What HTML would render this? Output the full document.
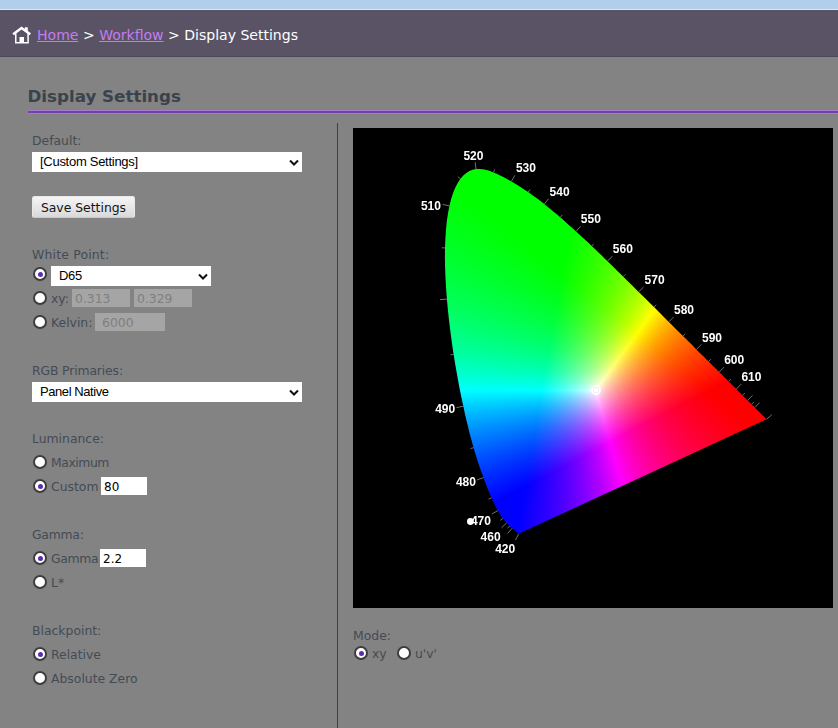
<!DOCTYPE html>
<html lang="en">
<head>
<meta charset="utf-8">
<title>Display Settings</title>
<style>
*{box-sizing:border-box;margin:0;padding:0}
html,body{width:838px;height:728px;overflow:hidden}
body{background:#838383;font-family:"DejaVu Sans","Liberation Sans",Verdana,sans-serif;font-size:12.4px;color:#434b55;position:relative}
.abs{position:absolute}
#strip{left:0;top:0;width:838px;height:9px;background:#b1cfeb}
#strip2{left:0;top:9px;width:838px;height:1px;background:#dfe6ee}
#hdr{left:0;top:10px;width:838px;height:46px;background:#595365}
#hdrline{left:0;top:56px;width:838px;height:1px;background:#4d4855}
#crumb{left:37px;top:26px;height:18px;line-height:18px;font-size:14.04px;color:#fff;white-space:nowrap}
#crumb a{color:#c77bf0;text-decoration:underline}
#home{left:12px;top:25px}
h1{left:27.5px;top:85px;font-size:16.7px;line-height:22px;font-weight:bold;color:#3a424c;white-space:nowrap}
#hline{left:28px;top:110px;width:810px;height:4px;background:linear-gradient(#a57bcb 0 1px,#733fa8 1px 3px,#a57bcb 3px 4px)}
#vline{left:337px;top:123px;width:1px;height:605px;background:#3f3f3f}
.lbl{left:32px;height:16px;line-height:16px;white-space:nowrap}
.sel{background:#fff;font-family:"Liberation Sans",Arial,sans-serif;font-size:13px;letter-spacing:-0.28px;color:#000;line-height:20px;padding-left:8px;white-space:nowrap}
.sel svg{position:absolute;right:2px;top:6px}
.btn{left:32px;top:196px;width:103px;height:22px;border:1px solid #e9e9e9;border-bottom-color:#c9c9c9;border-radius:2.5px;background:linear-gradient(#f5f5f5,#d9d9d9);color:#151515;line-height:21px;text-align:center;white-space:nowrap}
.rad{width:14px;height:14px;border-radius:50%;background:#fff;border:2px solid #3d3d3d}
.rad.on::after{content:"";position:absolute;left:2.5px;top:2.5px;width:5px;height:5px;border-radius:50%;background:#5a2db0}
.inp{background:#fff;color:#000;height:18px;line-height:20px;font-size:12px;padding-left:3px;white-space:nowrap}
.inp.dis{background:#a5a5a5;color:#7f7f7f;font-size:12.4px}
#canvas{left:353px;top:128px;width:480px;height:480px;background:#000;overflow:hidden}
.cie{position:absolute;left:0;width:480px}
.cie i{display:block;height:1px}
.ov{position:absolute;left:0;top:0;will-change:transform}
</style>
</head>
<body>
<div class="abs" id="strip"></div><div class="abs" id="strip2"></div>
<div class="abs" id="hdr"></div><div class="abs" id="hdrline"></div>
<svg class="abs" id="home" width="20" height="20" viewBox="0 0 20 20"><g fill="none" stroke="#fff"><path d="M1.1 9.2 L9.57 3 L18.3 9.2" stroke-width="2.4"/><path d="M3.76 8.3 V17.75 H16.1 V8.3" stroke-width="1.5"/></g><path d="M7.5 12.1 H12 V17.2 H7.5 Z M12.84 2.15 H15.76 V7 H12.84 Z" fill="#fff"/></svg>
<div class="abs" id="crumb"><a>Home</a> &gt; <a>Workflow</a> &gt; Display Settings</div>
<h1 class="abs">Display Settings</h1>
<div class="abs" id="hline"></div>
<div class="abs" id="vline"></div>

<div class="abs lbl" style="top:133px">Default:</div>
<div class="abs sel" style="left:32px;top:152px;width:270px;height:20px">[Custom Settings]<svg width="12" height="8" viewBox="0 0 12 8"><path d="M2 2.5 L6 6.5 L10 2.5" stroke="#111" stroke-width="2" fill="none"/></svg></div>
<div class="abs btn">Save Settings</div>

<div class="abs lbl" style="top:247px;letter-spacing:0.2px">White Point:</div>
<div class="abs rad on" style="left:33px;top:267px"></div>
<div class="abs sel" style="left:51px;top:266px;width:160px;height:20px">D65<svg width="12" height="8" viewBox="0 0 12 8"><path d="M2 2.5 L6 6.5 L10 2.5" stroke="#111" stroke-width="2" fill="none"/></svg></div>
<div class="abs rad" style="left:33px;top:291px"></div>
<div class="abs lbl" style="left:51px;top:291px">xy:</div>
<div class="abs inp dis" style="left:72px;top:289px;width:58px">0.313</div>
<div class="abs inp dis" style="left:134px;top:289px;width:58px">0.329</div>
<div class="abs rad" style="left:33px;top:315px"></div>
<div class="abs lbl" style="left:51px;top:315px">Kelvin:</div>
<div class="abs inp dis" style="left:95px;top:313px;width:70px;padding-left:7px">6000</div>

<div class="abs lbl" style="top:363px;letter-spacing:-0.14px">RGB Primaries:</div>
<div class="abs sel" style="left:32px;top:382px;width:270px;height:20px;letter-spacing:-0.43px">Panel Native<svg width="12" height="8" viewBox="0 0 12 8"><path d="M2 2.5 L6 6.5 L10 2.5" stroke="#111" stroke-width="2" fill="none"/></svg></div>

<div class="abs lbl" style="top:431px">Luminance:</div>
<div class="abs rad" style="left:33px;top:455px"></div>
<div class="abs lbl" style="left:51px;top:455px;letter-spacing:-0.45px">Maximum</div>
<div class="abs rad on" style="left:33px;top:479px"></div>
<div class="abs lbl" style="left:51px;top:479px">Custom</div>
<div class="abs inp" style="left:101px;top:477px;width:46px">80</div>

<div class="abs lbl" style="top:527px;letter-spacing:-0.25px">Gamma:</div>
<div class="abs rad on" style="left:33px;top:551px"></div>
<div class="abs lbl" style="left:51px;top:551px;letter-spacing:-0.35px">Gamma</div>
<div class="abs inp" style="left:100px;top:549px;width:46px">2.2</div>
<div class="abs rad" style="left:33px;top:575px"></div>
<div class="abs lbl" style="left:51px;top:575px">L*</div>

<div class="abs lbl" style="top:623px">Blackpoint:</div>
<div class="abs rad on" style="left:33px;top:647px"></div>
<div class="abs lbl" style="left:51px;top:647px">Relative</div>
<div class="abs rad" style="left:33px;top:671px"></div>
<div class="abs lbl" style="left:51px;top:671px">Absolute Zero</div>

<div class="abs" id="canvas">
<div class="cie" style="top:39px">
<i></i>
<i style="background:linear-gradient(90deg,#0f0 122px,#0f0 129px)"></i>
<i style="background:linear-gradient(90deg,#0f0 116px,#0f0 136px)"></i>
<i style="background:linear-gradient(90deg,#0f0 114px,#0f0 139px)"></i>
<i style="background:linear-gradient(90deg,#0f0 112px,#0f0 142px)"></i>
<i style="background:linear-gradient(90deg,#0f0 111px,#0f0 144px)"></i>
<i style="background:linear-gradient(90deg,#0f0 109px,#0f0 147px)"></i>
<i style="background:linear-gradient(90deg,#0f0 108px,#0f0 149px)"></i>
<i style="background:linear-gradient(90deg,#0f0 107px,#0f0 151px)"></i>
<i style="background:linear-gradient(90deg,#0f0 106px,#0f0 153px)"></i>
<i style="background:linear-gradient(90deg,#0f0 105px,#0f0 155px)"></i>
<i style="background:linear-gradient(90deg,#0f0 105px,#0f0 157px)"></i>
<i style="background:linear-gradient(90deg,#0f0 104px,#0f0 158px)"></i>
<i style="background:linear-gradient(90deg,#0f0 103px,#0f0 160px)"></i>
<i style="background:linear-gradient(90deg,#0f0 103px,#0f0 162px)"></i>
<i style="background:linear-gradient(90deg,#0f0 102px,#0f0 164px)"></i>
<i style="background:linear-gradient(90deg,#0f0 102px,#0f0 165px)"></i>
<i style="background:linear-gradient(90deg,#0f0 101px,#0f0 167px)"></i>
<i style="background:linear-gradient(90deg,#0f0 101px,#0f0 168px)"></i>
<i style="background:linear-gradient(90deg,#00ff01 100px,#0f0 170px)"></i>
<i style="background:linear-gradient(90deg,#00ff02 100px,#0f0 172px)"></i>
<i style="background:linear-gradient(90deg,#00ff02 99px,#0f0 106px,#0f0 173px)"></i>
<i style="background:linear-gradient(90deg,#00ff03 99px,#0f0 107px,#0f0 175px)"></i>
<i style="background:linear-gradient(90deg,#00ff04 98px,#0f0 108px,#0f0 176px)"></i>
<i style="background:linear-gradient(90deg,#00ff04 98px,#0f0 109px,#0f0 178px)"></i>
<i style="background:linear-gradient(90deg,#00ff05 98px,#0f0 110px,#0f0 179px)"></i>
<i style="background:linear-gradient(90deg,#00ff06 97px,#0f0 112px,#0f0 180px)"></i>
<i style="background:linear-gradient(90deg,#00ff06 97px,#0f0 113px,#0f0 182px)"></i>
<i style="background:linear-gradient(90deg,#00ff07 97px,#0f0 114px,#0f0 183px)"></i>
<i style="background:linear-gradient(90deg,#00ff08 96px,#0f0 115px,#0f0 185px)"></i>
<i style="background:linear-gradient(90deg,#00ff08 96px,#0f0 117px,#0f0 186px)"></i>
<i style="background:linear-gradient(90deg,#00ff09 96px,#0f0 118px,#0f0 187px)"></i>
<i style="background:linear-gradient(90deg,#00ff0a 95px,#0f0 119px,#0f0 189px)"></i>
<i style="background:linear-gradient(90deg,#00ff0a 95px,#0f0 120px,#0f0 190px)"></i>
<i style="background:linear-gradient(90deg,#00ff0b 95px,#0f0 122px,#0f0 191px)"></i>
<i style="background:linear-gradient(90deg,#00ff0b 95px,#0f0 123px,#0f0 192px)"></i>
<i style="background:linear-gradient(90deg,#00ff0c 94px,#0f0 124px,#0f0 194px)"></i>
<i style="background:linear-gradient(90deg,#00ff0d 94px,#0f0 125px,#0f0 195px)"></i>
<i style="background:linear-gradient(90deg,#00ff0d 94px,#0f0 126px,#0f0 196px)"></i>
<i style="background:linear-gradient(90deg,#00ff0e 94px,#0f0 128px,#0f0 197px)"></i>
<i style="background:linear-gradient(90deg,#00ff0f 93px,#0f0 129px,#0f0 199px)"></i>
<i style="background:linear-gradient(90deg,#00ff0f 93px,#0f0 130px,#0f0 200px)"></i>
<i style="background:linear-gradient(90deg,#00ff10 93px,#0f0 131px,#0f0 201px)"></i>
<i style="background:linear-gradient(90deg,#0f1 93px,#0f0 133px,#0f0 202px)"></i>
<i style="background:linear-gradient(90deg,#0f1 93px,#0f0 134px,#0f0 204px)"></i>
<i style="background:linear-gradient(90deg,#00ff12 93px,#0f0 135px,#0f0 205px)"></i>
<i style="background:linear-gradient(90deg,#00ff13 92px,#0f0 136px,#0f0 206px)"></i>
<i style="background:linear-gradient(90deg,#00ff13 92px,#0f0 138px,#0f0 207px)"></i>
<i style="background:linear-gradient(90deg,#00ff14 92px,#0f0 139px,#0f0 208px)"></i>
<i style="background:linear-gradient(90deg,#00ff15 92px,#0f0 140px,#0f0 209px)"></i>
<i style="background:linear-gradient(90deg,#00ff15 92px,#0f0 141px,#0f0 211px)"></i>
<i style="background:linear-gradient(90deg,#00ff16 92px,#0f0 143px,#0f0 212px)"></i>
<i style="background:linear-gradient(90deg,#00ff17 91px,#0f0 144px,#0f0 213px)"></i>
<i style="background:linear-gradient(90deg,#00ff17 91px,#0f0 145px,#0f0 214px)"></i>
<i style="background:linear-gradient(90deg,#00ff18 91px,#0f0 146px,#0f0 215px)"></i>
<i style="background:linear-gradient(90deg,#00ff19 91px,#0f0 148px,#0f0 216px)"></i>
<i style="background:linear-gradient(90deg,#00ff19 91px,#0f0 149px,#0f0 217px)"></i>
<i style="background:linear-gradient(90deg,#00ff1a 91px,#0f0 150px,#01ff00 218px)"></i>
<i style="background:linear-gradient(90deg,#00ff1a 91px,#0f0 151px,#0f0 217px,#03ff00 220px)"></i>
<i style="background:linear-gradient(90deg,#00ff1b 91px,#0f0 153px,#0f0 217px,#05ff00 221px)"></i>
<i style="background:linear-gradient(90deg,#00ff1c 91px,#0f0 154px,#0f0 216px,#06ff00 222px)"></i>
<i style="background:linear-gradient(90deg,#00ff1c 91px,#0f0 155px,#0f0 216px,#08ff00 223px)"></i>
<i style="background:linear-gradient(90deg,#00ff1d 90px,#0f0 156px,#0f0 216px,#09ff00 224px)"></i>
<i style="background:linear-gradient(90deg,#00ff1e 90px,#0f0 157px,#0f0 216px,#0bff00 225px)"></i>
<i style="background:linear-gradient(90deg,#00ff1f 90px,#0f0 159px,#0f0 216px,#0cff00 226px)"></i>
<i style="background:linear-gradient(90deg,#00ff1f 90px,#0f0 160px,#0f0 216px,#0eff00 227px)"></i>
<i style="background:linear-gradient(90deg,#00ff20 90px,#0f0 161px,#0f0 215px,#0fff00 228px)"></i>
<i style="background:linear-gradient(90deg,#00ff21 90px,#0f0 162px,#0f0 215px,#1f0 229px)"></i>
<i style="background:linear-gradient(90deg,#00ff21 90px,#0f0 164px,#0f0 215px,#13ff00 230px)"></i>
<i style="background:linear-gradient(90deg,#0f2 90px,#0f0 165px,#0f0 215px,#16ff00 232px)"></i>
<i style="background:linear-gradient(90deg,#00ff23 90px,#0f0 166px,#0f0 215px,#17ff00 233px)"></i>
<i style="background:linear-gradient(90deg,#00ff23 90px,#0f0 167px,#0f0 215px,#19ff00 234px)"></i>
<i style="background:linear-gradient(90deg,#00ff24 90px,#0f0 169px,#0f0 214px,#1bff00 235px)"></i>
<i style="background:linear-gradient(90deg,#00ff25 90px,#0f0 170px,#0f0 214px,#1cff00 236px)"></i>
<i style="background:linear-gradient(90deg,#00ff26 90px,#0f0 171px,#0f0 214px,#1eff00 237px)"></i>
<i style="background:linear-gradient(90deg,#00ff26 90px,#0f0 172px,#0f0 214px,#20ff00 238px)"></i>
<i style="background:linear-gradient(90deg,#00ff27 90px,#0f0 174px,#0f0 214px,#2f0 239px)"></i>
<i style="background:linear-gradient(90deg,#00ff28 90px,#0f0 175px,#0f0 214px,#24ff00 240px)"></i>
<i style="background:linear-gradient(90deg,#00ff28 90px,#0f0 176px,#0f0 213px,#25ff00 241px)"></i>
<i style="background:linear-gradient(90deg,#00ff29 90px,#0f0 177px,#0f0 213px,#27ff00 242px)"></i>
<i style="background:linear-gradient(90deg,#00ff2a 90px,#0f0 178px,#0f0 213px,#29ff00 243px)"></i>
<i style="background:linear-gradient(90deg,#00ff2b 89px,#0f0 180px,#0f0 213px,#2bff00 244px)"></i>
<i style="background:linear-gradient(90deg,#00ff2c 89px,#00ff17 137px,#0f0 181px,#0f0 213px,#2dff00 245px)"></i>
<i style="background:linear-gradient(90deg,#00ff2d 89px,#00ff17 138px,#0f0 182px,#0f0 213px,#2fff00 246px)"></i>
<i style="background:linear-gradient(90deg,#00ff2d 89px,#00ff18 138px,#0f0 183px,#0f0 212px,#31ff00 247px)"></i>
<i style="background:linear-gradient(90deg,#00ff2e 89px,#00ff18 139px,#0f0 185px,#0f0 212px,#3f0 248px)"></i>
<i style="background:linear-gradient(90deg,#00ff2f 89px,#00ff19 140px,#0f0 186px,#0f0 212px,#36ff00 249px)"></i>
<i style="background:linear-gradient(90deg,#00ff30 89px,#00ff19 141px,#0f0 187px,#0f0 212px,#39ff00 251px)"></i>
<i style="background:linear-gradient(90deg,#00ff30 89px,#00ff1a 141px,#0f0 188px,#0f0 212px,#3cff00 252px)"></i>
<i style="background:linear-gradient(90deg,#00ff31 89px,#00ff1a 142px,#0f0 190px,#0f0 212px,#3eff00 253px)"></i>
<i style="background:linear-gradient(90deg,#00ff32 89px,#00ff1a 143px,#0f0 191px,#0f0 211px,#1bff00 231px,#40ff00 254px)"></i>
<i style="background:linear-gradient(90deg,#0f3 89px,#00ff1b 143px,#0f0 192px,#0f0 211px,#1dff00 232px,#42ff00 255px)"></i>
<i style="background:linear-gradient(90deg,#00ff34 89px,#00ff1b 144px,#0f0 193px,#0f0 211px,#1fff00 233px,#45ff00 256px)"></i>
<i style="background:linear-gradient(90deg,#00ff34 89px,#00ff1c 144px,#0f0 195px,#0f0 211px,#21ff00 234px,#47ff00 257px)"></i>
<i style="background:linear-gradient(90deg,#00ff35 89px,#00ff1c 146px,#0f0 196px,#0f0 211px,#23ff00 235px,#4aff00 258px)"></i>
<i style="background:linear-gradient(90deg,#00ff36 89px,#00ff1d 146px,#0f0 197px,#0f0 211px,#25ff00 236px,#4cff00 259px)"></i>
<i style="background:linear-gradient(90deg,#00ff37 89px,#00ff1d 147px,#0f0 198px,#0f0 210px,#23ff00 234px,#4fff00 260px)"></i>
<i style="background:linear-gradient(90deg,#00ff37 90px,#00ff1d 148px,#0f0 200px,#0f0 210px,#25ff00 235px,#51ff00 261px)"></i>
<i style="background:linear-gradient(90deg,#00ff38 90px,#00ff1e 149px,#0f0 201px,#0f0 210px,#27ff00 236px,#54ff00 262px)"></i>
<i style="background:linear-gradient(90deg,#00ff39 90px,#00ff1e 150px,#0f0 202px,#0f0 210px,#29ff00 237px,#56ff00 263px)"></i>
<i style="background:linear-gradient(90deg,#00ff3a 90px,#00ff1f 150px,#0f0 203px,#0f0 210px,#2bff00 238px,#59ff00 264px)"></i>
<i style="background:linear-gradient(90deg,#00ff3b 90px,#00ff24 141px,#0f0 204px,#0f0 210px,#2dff00 239px,#5cff00 265px)"></i>
<i style="background:linear-gradient(90deg,#00ff3b 90px,#00ff23 146px,#0f0 209px,#2aff00 237px,#5fff00 266px)"></i>
<i style="background:linear-gradient(90deg,#00ff3c 90px,#0f2 149px,#0f0 209px,#2cff00 238px,#61ff00 267px)"></i>
<i style="background:linear-gradient(90deg,#00ff3d 90px,#00ff21 152px,#0f0 209px,#2fff00 239px,#64ff00 268px)"></i>
<i style="background:linear-gradient(90deg,#00ff3e 90px,#00ff21 154px,#0f0 209px,#31ff00 240px,#67ff00 269px)"></i>
<i style="background:linear-gradient(90deg,#00ff3f 90px,#0f2 154px,#00ff01 209px,#3f0 241px,#6aff00 270px)"></i>
<i style="background:linear-gradient(90deg,#00ff40 90px,#00ff23 154px,#00ff02 209px,#34ff00 241px,#6dff00 271px)"></i>
<i style="background:linear-gradient(90deg,#00ff41 90px,#00ff24 153px,#00ff04 208px,#08ff00 214px,#32ff00 240px,#70ff00 272px)"></i>
<i style="background:linear-gradient(90deg,#00ff42 90px,#00ff25 153px,#00ff05 208px,#0aff00 215px,#35ff00 241px,#74ff00 273px)"></i>
<i style="background:linear-gradient(90deg,#00ff43 90px,#00ff26 153px,#00ff06 208px,#0cff00 216px,#37ff00 242px,#7f0 274px)"></i>
<i style="background:linear-gradient(90deg,#0f4 90px,#00ff27 153px,#00ff06 208px,#0eff00 217px,#3aff00 243px,#7aff00 275px)"></i>
<i style="background:linear-gradient(90deg,#0f4 90px,#00ff28 153px,#00ff07 208px,#1f0 219px,#3cff00 244px,#7eff00 276px)"></i>
<i style="background:linear-gradient(90deg,#00ff45 90px,#00ff29 153px,#01ff08 208px,#13ff00 220px,#48ff00 250px,#81ff00 277px)"></i>
<i style="background:linear-gradient(90deg,#00ff46 90px,#00ff2a 153px,#00ff0a 207px,#15ff00 221px,#4bff00 251px,#85ff00 278px)"></i>
<i style="background:linear-gradient(90deg,#00ff47 90px,#00ff2b 153px,#00ff0b 207px,#17ff00 222px,#4eff00 252px,#8f0 279px)"></i>
<i style="background:linear-gradient(90deg,#00ff48 90px,#00ff2c 153px,#00ff0c 207px,#1bff00 224px,#50ff00 253px,#8cff00 280px)"></i>
<i style="background:linear-gradient(90deg,#00ff49 90px,#00ff2d 153px,#00ff0d 207px,#1dff00 225px,#53ff00 254px,#90ff00 281px)"></i>
<i style="background:linear-gradient(90deg,#00ff4a 90px,#00ff2e 153px,#00ff0e 207px,#1fff00 226px,#56ff00 255px,#93ff00 282px)"></i>
<i style="background:linear-gradient(90deg,#00ff4b 90px,#00ff2f 153px,#01ff0f 207px,#2f0 227px,#59ff00 256px,#97ff00 283px)"></i>
<i style="background:linear-gradient(90deg,#00ff4c 91px,#00ff30 153px,#00ff10 206px,#26ff00 229px,#5eff00 258px,#9bff00 284px)"></i>
<i style="background:linear-gradient(90deg,#00ff4d 91px,#00ff31 153px,#0f1 206px,#28ff00 230px,#61ff00 259px,#9fff00 285px)"></i>
<i style="background:linear-gradient(90deg,#00ff4e 91px,#00ff32 153px,#00ff13 206px,#2aff00 231px,#64ff00 260px,#a4ff00 286px)"></i>
<i style="background:linear-gradient(90deg,#00ff4f 91px,#0f3 153px,#00ff14 206px,#2dff00 232px,#68ff00 261px,#a8ff00 287px)"></i>
<i style="background:linear-gradient(90deg,#00ff50 91px,#00ff34 153px,#00ff15 206px,#31ff00 234px,#6bff00 262px,#acff00 288px)"></i>
<i style="background:linear-gradient(90deg,#00ff51 91px,#00ff35 153px,#01ff16 206px,#3f0 235px,#6eff00 263px,#b1ff00 289px)"></i>
<i style="background:linear-gradient(90deg,#00ff52 91px,#00ff37 152px,#00ff17 205px,#36ff00 236px,#72ff00 264px,#b5ff00 290px)"></i>
<i style="background:linear-gradient(90deg,#00ff53 91px,#00ff38 152px,#00ff18 205px,#39ff00 237px,#75ff00 265px,#baff00 291px)"></i>
<i style="background:linear-gradient(90deg,#00ff54 91px,#00ff39 152px,#00ff1a 205px,#3dff00 239px,#7bff00 267px,#bfff00 292px)"></i>
<i style="background:linear-gradient(90deg,#0f5 91px,#00ff3a 152px,#00ff1b 205px,#40ff00 240px,#7fff00 268px,#c3ff00 293px)"></i>
<i style="background:linear-gradient(90deg,#00ff56 91px,#00ff3b 152px,#01ff1c 205px,#43ff00 241px,#83ff00 269px,#c8ff00 294px)"></i>
<i style="background:linear-gradient(90deg,#00ff57 91px,#00ff3c 152px,#01ff1d 205px,#22ff0f 224px,#46ff00 242px,#87ff00 270px,#ceff00 295px)"></i>
<i style="background:linear-gradient(90deg,#00ff59 91px,#00ff3e 152px,#00ff1f 204px,#21ff11 223px,#49ff00 243px,#5fff00 253px,#95ff00 275px,#d3ff00 296px)"></i>
<i style="background:linear-gradient(90deg,#00ff5a 91px,#00ff3f 152px,#00ff20 204px,#23ff11 224px,#4bff01 244px,#62ff00 254px,#9f0 276px,#d8ff00 297px)"></i>
<i style="background:linear-gradient(90deg,#00ff5a 92px,#00ff40 152px,#00ff21 204px,#27ff11 226px,#51ff00 246px,#65ff00 255px,#9eff00 277px,#deff00 298px)"></i>
<i style="background:linear-gradient(90deg,#00ff5b 92px,#00ff41 152px,#0f2 204px,#28ff12 226px,#54ff00 247px,#69ff00 256px,#a2ff00 278px,#e3ff00 299px)"></i>
<i style="background:linear-gradient(90deg,#00ff5d 92px,#00ff42 152px,#01ff24 204px,#2bff12 227px,#57ff00 248px,#6aff00 256px,#a7ff00 279px,#e9ff00 300px)"></i>
<i style="background:linear-gradient(90deg,#00ff5e 92px,#0f4 152px,#01ff25 204px,#2bff14 227px,#5aff01 249px,#6dff00 257px,#abff00 280px,#efff00 301px)"></i>
<i style="background:linear-gradient(90deg,#00ff5f 92px,#00ff45 152px,#00ff27 203px,#34ff12 231px,#60ff00 251px,#6fff00 257px,#b0ff00 281px,#f5ff00 302px)"></i>
<i style="background:linear-gradient(90deg,#00ff60 92px,#00ff46 152px,#00ff28 203px,#37ff12 232px,#63ff00 252px,#72ff00 258px,#b5ff00 282px,#fcff00 303px)"></i>
<i style="background:linear-gradient(90deg,#00ff61 92px,#00ff47 152px,#00ff29 203px,#35ff14 231px,#67ff00 253px,#71ff00 257px,#aeff00 279px,#d4ff00 291px,#feff00 303px,#fffc00 304px)"></i>
<i style="background:linear-gradient(90deg,#00ff63 92px,#00ff48 152px,#00ff2a 203px,#34ff16 230px,#6bff01 254px,#afff00 279px,#d6ff00 291px,#fdff00 302px,#fff600 305px)"></i>
<i style="background:linear-gradient(90deg,#00ff64 92px,#00ff4a 152px,#01ff2c 203px,#37ff17 231px,#71ff00 256px,#b4ff00 280px,#fcff00 301px,#fffe00 302px,#ffef00 306px)"></i>
<i style="background:linear-gradient(90deg,#00ff65 92px,#00ff4b 152px,#01ff2d 203px,#37ff18 231px,#75ff00 257px,#b6ff00 280px,#ff0 301px,#ffe900 307px)"></i>
<i style="background:linear-gradient(90deg,#0f6 93px,#00ff4c 152px,#00ff2f 202px,#36ff1a 230px,#73ff02 256px,#7bff00 259px,#b5ff00 279px,#feff00 300px,#ffe300 308px)"></i>
<i style="background:linear-gradient(90deg,#00ff67 93px,#00ff4e 152px,#00ff30 202px,#37ff1b 230px,#72ff05 255px,#7fff00 260px,#b4ff00 278px,#fdff00 299px,#ffde00 309px)"></i>
<i style="background:linear-gradient(90deg,#00ff68 93px,#00ff4f 152px,#00ff32 202px,#37ff1d 230px,#73ff06 255px,#83ff00 261px,#b6ff00 278px,#fcff00 298px,#fffe00 299px,#ffd800 310px)"></i>
<i style="background:linear-gradient(90deg,#00ff6a 93px,#00ff50 152px,#01ff33 202px,#38ff1e 230px,#74ff07 255px,#8f0 262px,#b8ff00 278px,#ff0 298px,#ffd200 311px)"></i>
<i style="background:linear-gradient(90deg,#00ff6b 93px,#00ff52 152px,#01ff35 202px,#37ff20 229px,#73ff0a 254px,#8fff00 264px,#c4ff00 281px,#feff00 297px,#ffcd00 312px)"></i>
<i style="background:linear-gradient(90deg,#00ff6c 93px,#00ff53 152px,#01ff36 202px,#37ff22 229px,#72ff0c 253px,#93ff00 265px,#c6ff00 281px,#fdff00 296px,#fffd00 297px,#ffe100 305px,#ffc800 313px)"></i>
<i style="background:linear-gradient(90deg,#00ff6d 93px,#0f5 151px,#00ff38 201px,#34ff25 227px,#70ff0e 252px,#98ff00 266px,#c8ff00 281px,#fcff00 295px,#fffe00 296px,#ffde00 305px,#ffc300 314px)"></i>
<i style="background:linear-gradient(90deg,#00ff6f 93px,#00ff56 151px,#00ff3a 201px,#37ff25 228px,#74ff0f 253px,#9dff00 267px,#caff00 281px,#feff00 295px,#ffdb00 305px,#ffbd00 315px)"></i>
<i style="background:linear-gradient(90deg,#00ff70 93px,#00ff58 151px,#00ff3b 201px,#37ff27 228px,#73ff11 252px,#a1ff00 268px,#cdff00 281px,#fdff00 294px,#ffd600 306px,#ffb800 316px)"></i>
<i style="background:linear-gradient(90deg,#00ff71 93px,#00ff59 151px,#01ff3c 201px,#36ff29 227px,#71ff14 251px,#af0 270px,#d2ff00 282px,#fcff00 293px,#fffe00 294px,#ffd300 306px,#ffb400 317px)"></i>
<i style="background:linear-gradient(90deg,#00ff72 94px,#00ff5a 152px,#01ff3e 201px,#37ff2b 227px,#73ff15 251px,#afff00 271px,#d5ff00 282px,#ff0 293px,#ffd400 305px,#ffaf00 318px)"></i>
<i style="background:linear-gradient(90deg,#00ff74 94px,#00ff5c 151px,#00ff40 200px,#35ff2d 226px,#71ff18 250px,#b4ff00 272px,#feff00 292px,#ffd100 305px,#fa0 319px)"></i>
<i style="background:linear-gradient(90deg,#00ff75 94px,#00ff5e 151px,#00ff42 200px,#36ff2f 226px,#73ff19 250px,#baff00 273px,#fdff00 291px,#ffcb00 306px,#ffa600 320px)"></i>
<i style="background:linear-gradient(90deg,#0f7 94px,#00ff5f 151px,#00ff43 200px,#37ff30 226px,#71ff1c 249px,#98ff0e 262px,#bfff01 274px,#fcff00 290px,#fffe00 291px,#ffe300 298px,#ffc900 306px,#ffa100 321px)"></i>
<i style="background:linear-gradient(90deg,#00ff78 94px,#00ff61 151px,#00ff45 200px,#37ff32 226px,#72ff1d 249px,#9cff0f 263px,#c9ff00 276px,#ff0 290px,#ffe400 297px,#ffc900 305px,#ff9d00 322px)"></i>
<i style="background:linear-gradient(90deg,#00ff79 94px,#00ff62 151px,#01ff46 200px,#38ff33 226px,#74ff1f 249px,#9eff11 263px,#cfff00 277px,#feff00 289px,#ffc700 305px,#ff9800 323px)"></i>
<i style="background:linear-gradient(90deg,#00ff7b 94px,#00ff64 151px,#01ff48 200px,#37ff36 225px,#72ff22 248px,#a3ff11 264px,#d5ff00 278px,#fdff00 288px,#fffd00 289px,#ffde00 297px,#ffc100 306px,#ff9400 324px)"></i>
<i style="background:linear-gradient(90deg,#00ff7c 94px,#00ff65 151px,#00ff4a 199px,#35ff38 224px,#71ff24 247px,#a5ff13 264px,#dbff01 279px,#fffe00 288px,#ffdf00 296px,#ffc200 305px,#ffa700 315px,#ff9000 325px)"></i>
<i style="background:linear-gradient(90deg,#00ff7d 95px,#00ff67 151px,#00ff4c 199px,#36ff3a 224px,#72ff26 247px,#b5ff10 268px,#e6ff00 281px,#ff0 287px,#ffdc00 296px,#ffbf00 305px,#ffa400 315px,#ff8c00 326px)"></i>
<i style="background:linear-gradient(90deg,#00ff7f 95px,#00ff68 151px,#00ff4e 199px,#37ff3c 224px,#74ff28 247px,#b4ff13 267px,#edff00 282px,#feff00 286px,#ffda00 296px,#ffbd00 305px,#ffa200 315px,#f80 327px)"></i>
<i style="background:linear-gradient(90deg,#00ff80 95px,#00ff6a 151px,#00ff50 199px,#37ff3e 224px,#72ff2b 246px,#b2ff16 266px,#f4ff00 283px,#fffd00 286px,#ffda00 295px,#ffba00 305px,#ff9e00 316px,#ff8400 328px)"></i>
<i style="background:linear-gradient(90deg,#00ff82 95px,#00ff6c 151px,#01ff51 199px,#38ff3f 224px,#73ff2c 246px,#b4ff17 266px,#fffe00 285px,#ffdb00 294px,#ffb800 305px,#ff9b00 316px,#ff8000 329px)"></i>
<i style="background:linear-gradient(90deg,#00ff83 95px,#00ff6d 151px,#00ff54 198px,#34ff43 222px,#72ff2f 245px,#b3ff1a 265px,#feff02 284px,#ffd800 294px,#ffb500 305px,#ff9700 317px,#ff7c00 330px)"></i>
<i style="background:linear-gradient(90deg,#00ff85 95px,#00ff6f 151px,#00ff56 198px,#35ff45 222px,#70ff32 244px,#b2ff1d 264px,#fdff06 283px,#fff000 287px,#ffcf00 296px,#ffb300 305px,#ff9500 317px,#ff7800 331px)"></i>
<i style="background:linear-gradient(90deg,#00ff87 95px,#00ff71 151px,#00ff57 198px,#36ff47 222px,#72ff34 244px,#b0ff20 263px,#fffe07 283px,#ffe900 288px,#fc0 296px,#ffb100 305px,#ff9000 318px,#ff7500 332px)"></i>
<i style="background:linear-gradient(90deg,#0f8 95px,#00ff72 151px,#00ff59 198px,#37ff48 222px,#73ff36 244px,#b6ff21 264px,#ffff0b 282px,#ffde00 290px,#ffb100 304px,#ff8e00 318px,#ff7100 333px)"></i>
<i style="background:linear-gradient(90deg,#00ff89 96px,#00ff74 151px,#01ff5b 198px,#38ff4a 222px,#72ff39 243px,#b5ff24 263px,#feff0e 281px,#ffd800 291px,#ffac00 305px,#ff8a00 319px,#ff6d00 334px)"></i>
<i style="background:linear-gradient(90deg,#00ff8b 96px,#00ff76 151px,#01ff5d 198px,#38ff4c 222px,#73ff3b 243px,#b3ff27 262px,#fdff11 280px,#fffd10 281px,#ffd100 292px,#ffa900 305px,#f80 319px,#ff6a00 335px)"></i>
<i style="background:linear-gradient(90deg,#00ff8d 96px,#00ff78 151px,#01ff5f 198px,#37ff4f 221px,#71ff3e 242px,#b2ff2b 261px,#fcff15 279px,#fffe13 280px,#ffcb00 293px,#ffa700 305px,#ff8400 320px,#ff6700 336px)"></i>
<i style="background:linear-gradient(90deg,#00ff8e 96px,#00ff7a 151px,#00ff62 197px,#35ff52 220px,#73ff40 242px,#b4ff2d 261px,#ffff17 279px,#ffe10b 286px,#ffc501 294px,#ffa700 304px,#ff8400 319px,#ff6300 337px)"></i>
<i style="background:linear-gradient(90deg,#00ff90 96px,#00ff7b 151px,#00ff64 197px,#36ff54 220px,#71ff43 241px,#b3ff30 260px,#feff1a 278px,#ffdb0c 287px,#ffbf01 295px,#ffa500 304px,#ff8000 320px,#ff6000 338px)"></i>
<i style="background:linear-gradient(90deg,#00ff92 96px,#00ff7d 151px,#0f6 197px,#37ff56 220px,#73ff45 241px,#b5ff32 260px,#fcff1e 277px,#fffd1c 278px,#ffd40c 288px,#ffb901 296px,#ffa200 304px,#ff7d00 320px,#ff5d00 339px)"></i>
<i style="background:linear-gradient(90deg,#00ff93 96px,#00ff7f 151px,#01ff68 197px,#38ff58 220px,#71ff48 240px,#b3ff35 259px,#fbff21 276px,#fffe20 277px,#ffd50f 287px,#ffb000 298px,#ff9d00 305px,#ff7800 322px,#ff5800 341px)"></i>
<i style="background:linear-gradient(90deg,#00ff95 97px,#00ff81 151px,#01ff6a 197px,#38ff5a 220px,#73ff4a 240px,#b6ff38 259px,#ffff23 276px,#ffcb0e 289px,#ffab00 299px,#ff9d00 304px,#ff7600 322px,#f50 342px)"></i>
<i style="background:linear-gradient(90deg,#00ff96 97px,#00ff83 151px,#00ff6c 196px,#34ff5e 218px,#71ff4d 239px,#b4ff3b 258px,#fdff27 275px,#ffc80f 289px,#ffa601 300px,#ff9b00 304px,#ff7400 322px,#ff5200 343px)"></i>
<i style="background:linear-gradient(90deg,#00ff98 97px,#00ff85 151px,#00ff6f 196px,#35ff60 218px,#73ff50 239px,#b3ff3e 257px,#fcff2b 274px,#fffd29 275px,#ffdf1c 282px,#ffc511 289px,#ffa001 301px,#f90 304px,#ff7200 322px,#ff4f00 344px)"></i>
<i style="background:linear-gradient(90deg,#00ff9a 97px,#00ff87 151px,#00ff71 196px,#38ff62 219px,#74ff52 239px,#b5ff41 257px,#ffff2d 274px,#ffe01f 281px,#ffc514 288px,#ff9600 304px,#ff6e00 323px,#ff4c00 345px)"></i>
<i style="background:linear-gradient(90deg,#00ff9c 97px,#00ff89 151px,#00ff73 196px,#37ff65 218px,#72ff55 238px,#b4ff44 256px,#feff31 273px,#ffdc21 281px,#ffc315 288px,#ff9400 304px,#ff6c00 323px,#ff4900 346px)"></i>
<i style="background:linear-gradient(90deg,#00ff9e 97px,#00ff8b 151px,#01ff75 196px,#38ff67 218px,#74ff58 238px,#b6ff47 256px,#fdff35 272px,#ffd923 281px,#ffc017 288px,#ff9202 304px,#ff6800 324px,#ff4600 347px)"></i>
<i style="background:linear-gradient(90deg,#00ff9f 97px,#00ff8d 151px,#01ff77 196px,#36ff6a 217px,#72ff5b 237px,#b4ff4a 255px,#fcff39 271px,#fffe37 272px,#ffde28 279px,#ffc01a 287px,#ffa70e 295px,#ff8f03 304px,#f80 307px,#f60 324px,#ff4300 348px)"></i>
<i style="background:linear-gradient(90deg,#00ffa1 98px,#00ff8f 151px,#00ff7a 195px,#34ff6d 216px,#71ff5e 236px,#b3ff4e 254px,#ffff3b 271px,#ffdf2c 278px,#ffc11d 286px,#ffa711 294px,#ff8f06 303px,#ff8400 308px,#ff6400 324px,#ff4000 349px)"></i>
<i style="background:linear-gradient(90deg,#00ffa3 98px,#00ff91 151px,#00ff7d 195px,#35ff70 216px,#72ff61 236px,#b5ff51 254px,#feff3f 270px,#ffdc2e 278px,#ffc121 285px,#ffa513 294px,#ff8d07 303px,#ff7d00 310px,#ff6200 324px,#ff3d00 350px)"></i>
<i style="background:linear-gradient(90deg,#00ffa5 98px,#00ff94 151px,#00ff7f 195px,#36ff72 216px,#74ff64 236px,#b4ff54 253px,#fcff43 269px,#fffd41 270px,#ffdd31 277px,#ffbe22 285px,#ffa214 294px,#ff8b08 303px,#ff7900 311px,#ff5f00 325px,#ff3b00 351px)"></i>
<i style="background:linear-gradient(90deg,#00ffa7 98px,#00ff96 151px,#01ff82 195px,#37ff75 216px,#72ff67 235px,#b2ff58 252px,#fbff47 268px,#fffe46 269px,#ffd933 277px,#ffbb24 285px,#ff9f16 294px,#ff880a 303px,#ff7400 312px,#ff5300 331px,#ff3800 352px)"></i>
<i style="background:linear-gradient(90deg,#00ffa9 98px,#00ff98 151px,#01ff84 195px,#38ff78 216px,#74ff6a 235px,#b5ff5b 252px,#ffff4a 268px,#ffdf39 275px,#ffbf29 283px,#ffa31a 292px,#ff880c 302px,#ff7000 313px,#ff5000 332px,#ff3500 353px)"></i>
<i style="background:linear-gradient(90deg,#00ffab 98px,#00ff9a 151px,#01ff87 195px,#36ff7b 215px,#72ff6d 234px,#b3ff5f 251px,#fdff4e 267px,#ffd739 276px,#ffbc2b 283px,#ffa01c 292px,#ff860e 302px,#ff6a00 315px,#ff4d00 333px,#f30 354px)"></i>
<i style="background:linear-gradient(90deg,#00ffac 99px,#00ff9c 151px,#00ff8a 194px,#34ff7e 214px,#70ff71 233px,#b1ff63 250px,#fcff53 266px,#fffd51 267px,#ffd83d 275px,#ffba2c 283px,#ff9d1d 292px,#ff830f 302px,#f60 316px,#ff4a00 334px,#ff3000 355px)"></i>
<i style="background:linear-gradient(90deg,#00ffae 99px,#00ff9f 151px,#00ff8c 194px,#35ff81 214px,#72ff74 233px,#b4ff66 250px,#fffe55 266px,#ffd941 274px,#ffba30 282px,#ff9e20 291px,#ff8111 302px,#ff6300 317px,#ff4700 335px,#ff2e00 356px)"></i>
<i style="background:linear-gradient(90deg,#00ffb1 99px,#00ffa1 151px,#00ff8f 194px,#36ff84 214px,#73ff77 233px,#b6ff69 250px,#feff5a 265px,#ffda45 273px,#ffb731 282px,#ff9b22 291px,#ff7f12 302px,#ff5f00 318px,#f40 336px,#ff2b00 357px)"></i>
<i style="background:linear-gradient(90deg,#00ffb3 99px,#00ffa4 151px,#01ff92 194px,#37ff87 214px,#71ff7b 232px,#b5ff6d 249px,#fdff5e 264px,#ffd244 274px,#ffb433 282px,#ff9823 291px,#ff7c13 302px,#ff5b00 319px,#ff4100 337px,#ff2900 358px)"></i>
<i style="background:linear-gradient(90deg,#00ffb5 99px,#00ffa6 151px,#01ff94 194px,#38ff8a 214px,#73ff7e 232px,#b3ff71 248px,#fbff63 263px,#fffd61 264px,#ffd74b 272px,#ffb437 281px,#ff9625 291px,#ff7a15 302px,#ff5600 321px,#ff3c00 339px,#ff2600 359px)"></i>
<i style="background:linear-gradient(90deg,#00ffb7 99px,#00ffa9 150px,#00ff98 193px,#33ff8e 212px,#71ff82 231px,#b6ff74 248px,#ff6 263px,#ffd84f 271px,#ffb53a 280px,#ff9628 290px,#ff7a17 301px,#ff5200 322px,#ff3900 340px,#ff2400 360px)"></i>
<i style="background:linear-gradient(90deg,#00ffb9 100px,#00ffab 151px,#00ff9a 193px,#37ff90 213px,#73ff85 231px,#b4ff79 247px,#feff6b 262px,#ffd451 271px,#ffb23c 280px,#ff9329 290px,#ff7819 301px,#ff4f00 323px,#ff3700 341px,#f20 361px)"></i>
<i style="background:linear-gradient(90deg,#0fb 100px,#00ffad 151px,#00ff9d 193px,#35ff94 212px,#71ff89 230px,#b2ff7d 246px,#fcff6f 261px,#fffc6d 262px,#ffd153 271px,#ffb240 279px,#ff932c 289px,#ff751a 301px,#ff5f0c 312px,#ff4c00 324px,#ff3400 342px,#ff1f00 362px)"></i>
<i style="background:linear-gradient(90deg,#00ffbd 100px,#00ffb0 151px,#00ffa0 193px,#36ff97 212px,#73ff8c 230px,#b5ff80 246px,#fbff74 260px,#fffe72 261px,#ffd65a 269px,#ffaf41 279px,#ff912e 289px,#ff731b 301px,#ff5b0d 313px,#ff4700 326px,#ff3100 343px,#ff1d00 363px)"></i>
<i style="background:linear-gradient(90deg,#00ffbf 100px,#00ffb3 151px,#01ffa3 193px,#37ff9a 212px,#75ff8f 230px,#b8ff84 246px,#ffff78 260px,#ffd75e 268px,#ffb045 278px,#ff9131 288px,#ff731e 300px,#ff590e 313px,#f40 327px,#ff2e00 344px,#ff1b00 364px)"></i>
<i style="background:linear-gradient(90deg,#00ffc2 100px,#00ffb5 151px,#01ffa6 193px,#38ff9d 212px,#73ff94 229px,#b6ff88 245px,#fdff7d 259px,#ffcf5d 269px,#ffad47 278px,#ff8e33 288px,#ff7120 300px,#ff570f 313px,#ff4000 328px,#ff2c00 345px,#ff1900 365px)"></i>
<i style="background:linear-gradient(90deg,#00ffc4 100px,#00ffb8 150px,#0fa 192px,#33ffa2 210px,#71ff98 228px,#b4ff8d 244px,#fcff82 258px,#fffc7f 259px,#ffd062 268px,#ffad4b 277px,#ff8b34 288px,#ff6e21 300px,#ff540f 314px,#ff3d00 329px,#ff2900 346px,#ff1600 366px)"></i>
<i style="background:linear-gradient(90deg,#00ffc6 101px,#0fb 151px,#00ffad 192px,#34ffa5 210px,#6fff9c 227px,#b2ff92 243px,#faff87 257px,#fffe85 258px,#ffd167 267px,#ffaa4c 277px,#ff8936 288px,#ff6c22 300px,#ff5210 314px,#ff3a00 330px,#ff2600 347px,#ff1400 367px)"></i>
<i style="background:linear-gradient(90deg,#00ffc9 101px,#00ffbd 151px,#00ffb0 192px,#38ffa8 211px,#74ff9f 228px,#b5ff95 243px,#ffff8b 257px,#ffd26b 266px,#ffaa50 276px,#ff8939 287px,#ff6c25 299px,#ff5012 314px,#ff3600 332px,#ff2300 349px,#ff1200 368px)"></i>
<i style="background:linear-gradient(90deg,#00ffcb 101px,#00ffc0 151px,#01ffb3 192px,#36ffac 210px,#72ffa3 227px,#b3ff9a 242px,#fdff90 256px,#ffce6d 266px,#ffab54 275px,#ff893c 286px,#ff6926 299px,#ff4c12 315px,#f30 333px,#ff1000 369px)"></i>
<i style="background:linear-gradient(90deg,#00ffcd 101px,#00ffc3 151px,#01ffb7 192px,#37ffaf 210px,#70ffa8 226px,#b2ff9f 241px,#fbff95 255px,#fffd93 256px,#ffca6f 266px,#ffa856 275px,#ff863e 286px,#ff6728 299px,#ff4a13 315px,#ff3000 334px,#ff0e00 370px)"></i>
<i style="background:linear-gradient(90deg,#00ffd0 101px,#00ffc6 151px,#01ffba 192px,#38ffb3 210px,#72ffac 226px,#b4ffa3 241px,#fffe99 255px,#ffd077 264px,#ffa85a 274px,#ff8641 285px,#ff672b 298px,#ff4814 315px,#ff2d00 335px,#ff0c00 371px)"></i>
<i style="background:linear-gradient(90deg,#00ffd2 101px,#00ffbe 191px,#32ffb8 208px,#70ffb0 225px,#b3ffa8 240px,#feff9f 254px,#ffd17c 263px,#ffa85e 273px,#ff8343 285px,#ff652c 298px,#ff4514 316px,#ff2900 337px,#ff0a00 372px)"></i>
<i style="background:linear-gradient(90deg,#00ffd5 102px,#00ffc1 191px,#37ffbb 209px,#72ffb4 225px,#b6ffac 240px,#fdffa4 253px,#fffca1 254px,#ffcd7e 263px,#ffa560 273px,#ff8144 285px,#ff622d 298px,#ff4315 316px,#ff2700 338px,#ff0800 373px)"></i>
<i style="background:linear-gradient(90deg,#00ffd7 102px,#00ffc5 191px,#34ffbf 208px,#70ffb9 224px,#b4ffb2 239px,#fbffaa 252px,#fffda8 253px,#ffc980 263px,#ffa262 273px,#ff7e46 285px,#ff602f 298px,#ff3f15 317px,#ff2400 339px,#ff0600 374px)"></i>
<i style="background:linear-gradient(90deg,#00ffda 102px,#01ffc9 191px,#36ffc3 208px,#72ffbd 224px,#b7ffb6 239px,#ffffaf 252px,#ffcf89 261px,#ffa669 271px,#ff804b 283px,#ff6031 297px,#ff3d16 317px,#ff2100 340px,#ff0400 375px)"></i>
<i style="background:linear-gradient(90deg,#0fd 102px,#01ffcc 191px,#37ffc7 208px,#74ffc2 224px,#b5ffbb 238px,#feffb5 251px,#ffcb8b 261px,#ffa36a 271px,#ff7e4d 283px,#ff5d33 297px,#ff3b18 317px,#ff1f01 341px,#ff0200 376px)"></i>
<i style="background:linear-gradient(90deg,#00ffdf 102px,#02ffd0 191px,#38ffcb 208px,#72ffc6 223px,#b3ffc1 237px,#fcffba 250px,#fffcb7 251px,#ffcc90 260px,#ffa36f 270px,#ff7e50 282px,#ff5d36 296px,#ff3a19 317px,#ff1b00 343px,#f00 377px)"></i>
<i style="background:linear-gradient(90deg,#00ffe2 103px,#00ffd4 190px,#32ffd0 206px,#6fffcb 222px,#b1ffc6 236px,#faffc0 249px,#fffdbf 250px,#ffe1a7 255px,#ffc38e 261px,#ff9c6e 271px,#ff7850 283px,#ff5935 297px,#ff3619 318px,#ff1900 344px,#ff0600 366px,#f00 378px)"></i>
<i style="background:linear-gradient(90deg,#00ffe5 103px,#00ffd8 190px,#37ffd4 207px,#71ffd0 222px,#b4ffcb 236px,#ffffc6 249px,#ffcd9c 258px,#ffa075 269px,#ff7853 282px,#ff5838 296px,#ff341a 318px,#ff1600 345px,#f00 373px,#f00 379px)"></i>
<i style="background:linear-gradient(90deg,#00ffe7 103px,#00ffdc 190px,#38ffd9 207px,#74ffd5 222px,#b7ffd0 236px,#fdffcc 248px,#ffc99d 258px,#ff9d77 269px,#ff7555 282px,#ff563a 296px,#ff311a 319px,#ff1401 346px,#f00 371px,#f00 380px)"></i>
<i style="background:linear-gradient(90deg,#00ffea 103px,#01ffe0 190px,#36ffdd 206px,#71ffda 221px,#b5ffd6 235px,#fbffd2 247px,#fffccf 248px,#ffdfb5 253px,#ffc69f 258px,#ff9978 269px,#ff7356 282px,#ff5239 297px,#ff2e1a 320px,#ff1000 348px,#f00 369px,#f00 381px)"></i>
<i style="background:linear-gradient(90deg,#00ffed 103px,#01ffe4 190px,#37ffe2 206px,#73ffdf 221px,#b3ffdc 234px,#faffd8 246px,#fffed7 247px,#ffe0bc 252px,#ffc2a1 258px,#ff967a 269px,#ff7058 282px,#ff503b 297px,#ff2c1b 320px,#ff0e00 349px,#f00 368px,#f00 382px)"></i>
<i style="background:linear-gradient(90deg,#00fff0 103px,#00ffe9 189px,#31ffe7 204px,#71ffe4 220px,#b6ffe1 234px,#feffde 246px,#ffc7ab 256px,#ff9a82 267px,#ff725e 280px,#ff4f3e 296px,#ff2a1c 320px,#ff0c00 350px,#f00 366px,#f00 383px)"></i>
<i style="background:linear-gradient(90deg,#00fff3 104px,#00ffed 189px,#36ffeb 205px,#73ffe9 220px,#b4ffe7 233px,#fdffe5 245px,#fffbe1 246px,#ffddc5 251px,#ffc3ad 256px,#ff9684 267px,#ff705f 280px,#ff4d3f 296px,#ff271c 321px,#ff0a01 351px,#f00 364px,#f00 384px)"></i>
<i style="background:linear-gradient(90deg,#00fff6 104px,#00fff2 189px,#37fff0 205px,#71ffef 219px,#b2ffed 232px,#fbffeb 244px,#fffde9 245px,#ffdecc 250px,#ffbfaf 256px,#ff9385 267px,#ff6a5f 281px,#ff493f 297px,#ff241c 322px,#ff0701 352px,#f00 362px,#f00 385px)"></i>
<i style="background:linear-gradient(90deg,#00fff9 104px,#00fff6 189px,#38fff5 205px,#73fff4 219px,#b5fff3 232px,#fffef1 244px,#ffdfd3 249px,#ffc5ba 254px,#ffaaa0 260px,#ff938a 266px,#ff6a62 280px,#ff4842 296px,#ff352f 308px,#ff231d 322px,#ff0400 354px,#f00 360px,#f00 386px)"></i>
<i style="background:linear-gradient(90deg,#00fffc 104px,#01fffb 189px,#35fffb 204px,#71fffa 218px,#b3fffa 231px,#fefff9 243px,#fff9f3 244px,#ffdbd5 249px,#ffc1bc 254px,#ffa6a2 260px,#ff908c 266px,#ff6764 280px,#ff4441 297px,#ff201d 323px,#ff0200 355px,#f00 387px)"></i>
<i style="background:linear-gradient(90deg,#0ff 104px,#02feff 189px,#37feff 204px,#72feff 218px,#b0feff 230px,#fbfeff 242px,#fffbfc 243px,#ffdcdd 248px,#ffc1c2 253px,#ffa7a7 259px,#ff9091 265px,#ff6565 280px,#ff4242 297px,#ff1e1e 323px,#f00 356px,#f00 388px)"></i>
<i style="background:linear-gradient(90deg,#00fbff 105px,#00faff 188px,#33f9ff 203px,#72f8ff 218px,#b5f8ff 231px,#fff6fe 243px,#ffd7df 248px,#ffbdc4 253px,#ffa3a9 259px,#ff8d92 265px,#ff6267 280px,#ff4044 297px,#ff1c1f 323px,#ff0003 354px,#f00 358px,#f00 389px)"></i>
<i style="background:linear-gradient(90deg,#00f8ff 105px,#00f5ff 188px,#33f4ff 203px,#6df3ff 217px,#b4f2ff 231px,#fef0ff 243px,#ffebf9 244px,#ffcddb 249px,#ffb5c1 254px,#ff9ba7 260px,#ff8691 266px,#ff5d66 281px,#ff3c43 298px,#ff1b22 322px,#ff0005 352px,#f00 359px,#f00 390px)"></i>
<i style="background:linear-gradient(90deg,#00f5ff 105px,#00f0ff 188px,#37efff 204px,#71edff 218px,#adecff 230px,#d6ebff 237px,#fce9ff 243px,#ffe6fb 244px,#ffc9dd 249px,#ffb1c3 254px,#ff98a9 260px,#ff8392 266px,#ff5a67 281px,#ff3a45 298px,#ff1b24 321px,#ff0008 350px,#f00 361px,#f00 391px)"></i>
<i style="background:linear-gradient(90deg,#00f2ff 105px,#01ecff 188px,#37eaff 204px,#71e8ff 218px,#b2e6ff 231px,#ffe1fd 244px,#ffc5df 249px,#ffa8c0 255px,#ff7d90 267px,#f56 282px,#ff3644 299px,#ff1925 321px,#ff000a 348px,#f00 362px,#f00 392px)"></i>
<i style="background:linear-gradient(90deg,#00efff 105px,#01e7ff 188px,#37e5ff 204px,#75e2ff 219px,#b6dfff 232px,#ffdcff 244px,#ffc0e0 249px,#ffa4c2 255px,#ff7992 267px,#ff5368 282px,#ff3445 299px,#ff1827 320px,#ff010d 346px,#f00 363px,#f00 393px)"></i>
<i style="background:linear-gradient(90deg,#00ecff 106px,#02e3ff 188px,#38e0ff 204px,#70ddff 218px,#abdaff 230px,#d2d8ff 237px,#fdd6ff 244px,#ffd2fa 245px,#ffb7dd 250px,#ff9dbf 256px,#ff7390 268px,#ff4e67 283px,#ff3045 300px,#ff1627 321px,#ff000f 345px,#f00 364px,#f00 394px)"></i>
<i style="background:linear-gradient(90deg,#00e9ff 106px,#00dfff 187px,#34dcff 203px,#70d8ff 218px,#afd4ff 231px,#fbd0ff 244px,#ffcdfc 245px,#ffb3de 250px,#ff99c0 256px,#ff7092 268px,#ff4c68 283px,#ff2e46 300px,#ff1529 320px,#f01 343px,#f00 365px,#f00 395px)"></i>
<i style="background:linear-gradient(90deg,#00e6ff 106px,#00dbff 187px,#34d7ff 203px,#70d3ff 218px,#b3ceff 232px,#ffc8fe 245px,#ffafe0 250px,#ff95c2 256px,#ff6d93 268px,#ff4969 283px,#ff2a46 301px,#ff142c 319px,#ff0014 341px,#f00 367px,#f00 396px)"></i>
<i style="background:linear-gradient(90deg,#00e3ff 106px,#00d6ff 187px,#38d2ff 204px,#74ceff 219px,#b8c8ff 233px,#fec3ff 245px,#ffa6dd 251px,#ff91c4 256px,#ff6a95 268px,#ff476b 283px,#ff2847 301px,#ff122d 319px,#ff0017 339px,#f00 368px,#f00 397px)"></i>
<i style="background:linear-gradient(90deg,#00e0ff 106px,#01d2ff 187px,#35ceff 203px,#6fc9ff 218px,#acc4ff 231px,#d2c1ff 238px,#fcbdff 245px,#ffbafb 246px,#ffa2de 251px,#ff8ac1 257px,#ff6493 269px,#ff426a 284px,#ff2546 302px,#ff122f 318px,#ff001a 337px,#f00 369px,#f00 398px)"></i>
<i style="background:linear-gradient(90deg,#0df 107px,#01ceff 187px,#38c9ff 204px,#73c4ff 219px,#b1beff 232px,#ffb6fd 246px,#ff9ee0 251px,#ff86c3 257px,#ff6195 269px,#ff406b 284px,#ff2348 302px,#ff1131 317px,#ff001d 335px,#f00 370px,#f00 399px)"></i>
<i style="background:linear-gradient(90deg,#00daff 107px,#02caff 187px,#38c5ff 204px,#73bfff 219px,#b5b9ff 233px,#ffb1ff 246px,#ff9ae2 251px,#ff83c4 257px,#ff6fab 263px,#ff5c93 270px,#ff3b6a 285px,#ff1f47 303px,#ff0f33 317px,#ff0020 333px,#f00 371px,#f00 400px)"></i>
<i style="background:linear-gradient(90deg,#00d7ff 107px,#00c6ff 186px,#32c1ff 202px,#6ebbff 218px,#aab4ff 231px,#d4b0ff 239px,#fdacff 246px,#ffa8fa 247px,#ff92de 252px,#ff7cc1 258px,#ff69a9 264px,#ff5691 271px,#ff3769 286px,#ff1c47 304px,#ff0023 331px,#ff0007 362px,#f00 373px,#f00 401px)"></i>
<i style="background:linear-gradient(90deg,#00d4ff 107px,#00c3ff 186px,#35bdff 203px,#72b6ff 219px,#aeafff 232px,#d3abff 239px,#fca6ff 246px,#ffa4fc 247px,#ff8ee0 252px,#ff78c3 258px,#ff66ab 264px,#ff5393 271px,#ff356b 286px,#ff1a48 304px,#ff0026 329px,#ff0008 362px,#f00 374px,#f00 402px)"></i>
<i style="background:linear-gradient(90deg,#00d1ff 108px,#00bfff 186px,#35b8ff 203px,#72b1ff 219px,#b2a9ff 233px,#ff9ffe 247px,#ff8ae2 252px,#ff75c5 258px,#ff62ac 264px,#ff5094 271px,#ff316a 287px,#ff1747 305px,#ff0028 328px,#ff0008 363px,#f00 376px,#f00 403px)"></i>
<i style="background:linear-gradient(90deg,#00cfff 108px,#01bbff 186px,#36b4ff 203px,#72adff 219px,#b6a4ff 234px,#fe9bff 247px,#ff83de 253px,#ff71c6 258px,#ff5fae 264px,#ff4e96 271px,#ff2e6b 287px,#ff1549 305px,#ff002c 326px,#ff001a 343px,#ff0009 363px,#f00 377px,#f00 404px)"></i>
<i style="background:linear-gradient(90deg,#0cf 108px,#01b7ff 186px,#36b0ff 203px,#71a8ff 219px,#aba0ff 232px,#d59bff 240px,#fd96ff 247px,#ff93fb 248px,#ff7fe0 253px,#ff6bc4 259px,#ff4894 272px,#ff2a6a 288px,#ff1248 306px,#ff002f 324px,#ff001b 343px,#ff0009 364px,#f00 378px,#f00 405px)"></i>
<i style="background:linear-gradient(90deg,#00c9ff 108px,#02b3ff 186px,#36acff 203px,#71a4ff 219px,#af9bff 233px,#ff8ffd 248px,#ff7be1 253px,#ff67c5 259px,#ff4695 272px,#ff286b 288px,#ff1049 306px,#f03 322px,#ff001d 342px,#ff000a 364px,#f00 379px,#f00 406px)"></i>
<i style="background:linear-gradient(90deg,#00c6ff 108px,#00b0ff 185px,#33a9ff 202px,#71a0ff 219px,#b396ff 234px,#ff8aff 248px,#ff77e3 253px,#ff64c7 259px,#ff51ab 266px,#ff4194 273px,#ff246a 289px,#ff0d49 307px,#ff0036 320px,#ff001f 341px,#ff000a 365px,#f00 380px,#f00 407px)"></i>
<i style="background:linear-gradient(90deg,#00c4ff 109px,#00adff 185px,#36a4ff 203px,#709bff 219px,#a993ff 232px,#d18dff 240px,#fe86ff 248px,#ff82fa 249px,#ff70e0 254px,#ff5ec4 260px,#ff4ba9 267px,#ff3c92 274px,#ff2069 290px,#ff0a48 308px,#ff003a 318px,#ff0020 340px,#ff000a 366px,#f00 382px,#f00 408px)"></i>
<i style="background:linear-gradient(90deg,#00c1ff 109px,#00a9ff 185px,#36a0ff 203px,#7097ff 219px,#ad8eff 233px,#d587ff 241px,#fc81ff 248px,#ff7ffc 249px,#ff6de1 254px,#ff5ac6 260px,#ff48aa 267px,#ff3994 274px,#ff1e6b 290px,#ff0849 308px,#ff003e 316px,#f02 339px,#ff000b 366px,#f00 383px,#f00 409px)"></i>
<i style="background:linear-gradient(90deg,#00beff 109px,#01a6ff 185px,#369dff 203px,#7492ff 220px,#b688ff 235px,#ff7bfe 249px,#ff69e3 254px,#ff57c7 260px,#ff45ac 267px,#ff3695 274px,#ff1c6c 290px,#ff064b 308px,#ff0041 314px,#ff0029 334px,#ff000c 366px,#f00 384px,#f00 410px)"></i>
<i style="background:linear-gradient(90deg,#00bcff 109px,#00b0ff 150px,#01a2ff 185px,#3799ff 203px,#748eff 220px,#b583ff 235px,#ff76ff 249px,#ff62df 255px,#ff51c4 261px,#ff3496 274px,#ff1a6d 290px,#ff034a 309px,#f04 313px,#ff0028 335px,#ff000c 367px,#f00 385px,#f00 411px)"></i>
<i style="background:linear-gradient(90deg,#00b9ff 109px,#00adff 150px,#029fff 185px,#3795ff 203px,#6f8bff 219px,#ab81ff 233px,#d17aff 241px,#fd72ff 249px,#ff6ffb 250px,#ff5fe1 255px,#ff4ec6 261px,#ff3dab 268px,#ff2f95 275px,#ff166c 291px,#ff004a 310px,#ff0028 336px,#ff000c 368px,#f00 387px,#f00 412px)"></i>
<i style="background:linear-gradient(90deg,#00b6ff 110px,#0af 150px,#009cff 184px,#3492ff 202px,#6f87ff 219px,#ae7cff 234px,#ff6bfd 250px,#ff5be3 255px,#ff4bc7 261px,#ff3aad 268px,#ff2d96 275px,#ff146e 291px,#ff004b 310px,#ff0029 336px,#ff000d 368px,#f00 388px,#f00 413px)"></i>
<i style="background:linear-gradient(90deg,#00b4ff 110px,#00a7ff 150px,#0098ff 184px,#378eff 203px,#7383ff 220px,#b277ff 235px,#ff68ff 250px,#ff55df 256px,#ff45c5 262px,#ff2a97 275px,#ff126f 291px,#ff0152 306px,#ff004c 310px,#ff002a 336px,#ff000e 368px,#f00 389px,#f00 414px)"></i>
<i style="background:linear-gradient(90deg,#00b1ff 110px,#00a4ff 150px,#0095ff 184px,#348bff 202px,#6f80ff 219px,#a874ff 233px,#d36cff 242px,#fe63ff 250px,#ff61fb 251px,#ff4fdc 257px,#ff40c2 263px,#ff2493 277px,#ff1274 289px,#ff0259 303px,#ff004a 312px,#ff0029 338px,#ff000d 370px,#f00 390px,#f00 415px)"></i>
<i style="background:linear-gradient(90deg,#00afff 110px,#00a1ff 150px,#0192ff 184px,#3787ff 203px,#727bff 220px,#b16eff 235px,#fc5fff 250px,#ff5dfc 251px,#ff4bde 257px,#ff3dc4 263px,#ff2194 277px,#ff1076 289px,#ff015b 302px,#ff004b 312px,#ff002a 338px,#ff000e 370px,#f00 392px,#f00 416px)"></i>
<i style="background:linear-gradient(90deg,#00acff 111px,#009eff 150px,#018fff 184px,#3783ff 203px,#7277ff 220px,#b46aff 236px,#ff59fe 251px,#ff48df 257px,#ff3ac5 263px,#ff1f96 277px,#ff0f79 288px,#ff005e 301px,#ff004c 312px,#ff002b 338px,#ff000f 370px,#f00 393px,#f00 416px)"></i>
<i style="background:linear-gradient(90deg,#00a9ff 111px,#009cff 150px,#008cff 183px,#3481ff 202px,#7174ff 220px,#b366ff 236px,#ff56ff 251px,#ff45e1 257px,#ff37c7 263px,#ff1e9a 276px,#ff0e7d 287px,#ff0063 299px,#ff004f 311px,#ff002e 336px,#ff0013 366px,#f00 394px,#f00 414px)"></i>
<i style="background:linear-gradient(90deg,#00a7ff 111px,#09f 150px,#0089ff 183px,#357dff 202px,#7170ff 220px,#ae63ff 235px,#d45bff 243px,#fd51ff 251px,#ff4ffb 252px,#ff3fde 258px,#ff31c4 264px,#ff1a98 277px,#ff0c7e 287px,#ff0068 297px,#ff0050 311px,#ff0030 335px,#ff0016 363px,#f00 395px,#f00 412px)"></i>
<i style="background:linear-gradient(90deg,#00a4ff 111px,#0096ff 150px,#0086ff 183px,#357aff 202px,#716dff 220px,#b25eff 236px,#ff4cfd 252px,#ff3cdf 258px,#ff2ec6 264px,#ff179a 277px,#ff006e 295px,#ff0052 310px,#f03 333px,#ff0019 360px,#f00 396px,#f00 410px)"></i>
<i style="background:linear-gradient(90deg,#00a2ff 112px,#0093ff 150px,#0183ff 183px,#3876ff 203px,#7468ff 221px,#b559ff 237px,#ff48fe 252px,#ff2ecb 263px,#ff169e 276px,#ff0073 293px,#f05 309px,#ff0036 331px,#ff001c 357px,#f00 397px,#f00 408px)"></i>
<i style="background:linear-gradient(90deg,#009fff 112px,#0091ff 150px,#0180ff 183px,#3574ff 202px,#7066ff 220px,#ac58ff 235px,#d54eff 244px,#fe44ff 252px,#ff42fb 253px,#ff29c8 264px,#ff129c 277px,#ff0078 291px,#ff0056 309px,#ff0039 330px,#ff0020 354px,#ff0005 390px,#f00 399px,#f00 406px)"></i>
<i style="background:linear-gradient(90deg,#009dff 112px,#008eff 150px,#017dff 183px,#3570ff 202px,#7062ff 220px,#af53ff 236px,#fc40ff 252px,#ff3efc 253px,#ff26ca 264px,#ff109e 277px,#ff007e 289px,#ff0059 308px,#ff003c 328px,#ff0023 351px,#ff000c 381px,#f00 404px)"></i>
<i style="background:linear-gradient(90deg,#009bff 112px,#008cff 149px,#007bff 182px,#326eff 201px,#705fff 220px,#b34eff 237px,#ff3bfe 253px,#ff23cb 264px,#ff0fa2 276px,#ff0082 288px,#ff005c 307px,#ff003f 326px,#ff0028 347px,#ff0013 372px,#f00 401px)"></i>
<i style="background:linear-gradient(90deg,#0098ff 113px,#0089ff 150px,#0078ff 182px,#356aff 202px,#735bff 221px,#b74aff 238px,#ff38ff 253px,#ff20cd 264px,#ff0ca3 276px,#f08 286px,#ff005e 306px,#ff0042 325px,#ff002a 346px,#ff0014 371px,#ff0002 399px)"></i>
<i style="background:linear-gradient(90deg,#0096ff 113px,#0086ff 150px,#0075ff 182px,#3667ff 202px,#6f58ff 220px,#ad48ff 236px,#d63eff 245px,#fd34ff 253px,#ff32fb 254px,#ff25df 260px,#ff18c3 267px,#ff0ba7 275px,#ff0191 283px,#f07 294px,#ff005f 306px,#f04 324px,#ff002c 345px,#ff0017 369px,#ff0004 397px)"></i>
<i style="background:linear-gradient(90deg,#0093ff 113px,#0084ff 150px,#0172ff 182px,#3664ff 202px,#7354ff 221px,#b144ff 237px,#ff2efd 254px,#ff22e0 260px,#ff15c4 267px,#ff0095 282px,#ff007a 293px,#ff0061 306px,#ff0045 324px,#ff002d 345px,#ff0018 368px,#ff0006 395px)"></i>
<i style="background:linear-gradient(90deg,#0091ff 113px,#0081ff 150px,#016fff 182px,#3661ff 202px,#7251ff 221px,#b43fff 238px,#ff2bfe 254px,#ff1fe2 260px,#ff14c9 266px,#ff009b 280px,#ff007d 292px,#ff0063 305px,#ff0047 323px,#ff0030 343px,#ff001b 366px,#ff0008 393px)"></i>
<i style="background:linear-gradient(90deg,#008eff 114px,#007fff 150px,#016cff 182px,#365eff 202px,#724eff 221px,#b33cff 238px,#fe28ff 254px,#ff11ca 266px,#ff00a2 278px,#ff0081 291px,#ff0064 305px,#ff004a 322px,#ff0031 342px,#ff001c 365px,#ff000a 391px)"></i>
<i style="background:linear-gradient(90deg,#008cff 114px,#007cff 150px,#006aff 181px,#335cff 201px,#6e4cff 220px,#af3aff 237px,#d62fff 246px,#fd24ff 254px,#ff22fc 255px,#ff10d0 265px,#f0a 276px,#ff0084 290px,#f06 305px,#ff004b 322px,#ff0032 342px,#ff001e 364px,#ff000c 389px)"></i>
<i style="background:linear-gradient(90deg,#008aff 114px,#007aff 150px,#0068ff 181px,#3658ff 202px,#7248ff 221px,#b236ff 238px,#fb21ff 254px,#ff1ffe 255px,#ff0fd5 264px,#ff00b1 274px,#ff008a 288px,#ff0068 304px,#ff004d 321px,#ff0035 340px,#ff0020 362px,#ff000e 386px)"></i>
<i style="background:linear-gradient(90deg,#08f 114px,#07f 150px,#0065ff 181px,#3955ff 203px,#7544ff 222px,#b531ff 239px,#ff1cff 255px,#ff0ad2 265px,#ff00b9 272px,#ff00ac 276px,#ff0089 289px,#ff0069 304px,#ff004f 320px,#ff0037 339px,#ff0023 360px,#ff0010 384px)"></i>
<i style="background:linear-gradient(90deg,#0085ff 115px,#0075ff 150px,#0162ff 181px,#3653ff 202px,#7541ff 222px,#b52eff 239px,#fe19ff 255px,#ff0bdc 263px,#ff00c1 270px,#f0a 277px,#ff008a 289px,#ff006c 303px,#ff0052 319px,#ff0039 338px,#ff0024 359px,#ff0012 382px)"></i>
<i style="background:linear-gradient(90deg,#0083ff 115px,#0072ff 150px,#0160ff 181px,#3750ff 202px,#743eff 222px,#b42bff 239px,#fc16ff 255px,#ff14fd 256px,#ff01ca 268px,#ff00ac 277px,#ff008b 289px,#ff006d 303px,#ff0053 319px,#ff003b 337px,#ff0027 357px,#ff0015 380px)"></i>
<i style="background:linear-gradient(90deg,#0081ff 115px,#0070ff 150px,#025dff 181px,#374dff 202px,#743bff 222px,#b328ff 239px,#ff11fe 256px,#ff01d3 266px,#ff00ad 277px,#ff008c 289px,#ff006f 303px,#ff0054 319px,#ff003d 336px,#ff0029 356px,#ff0017 378px)"></i>
<i style="background:linear-gradient(90deg,#007fff 115px,#006eff 149px,#005bff 180px,#374aff 202px,#7438ff 222px,#b624ff 240px,#fe0eff 256px,#ff00d8 265px,#ff00ae 277px,#ff008e 289px,#ff0072 302px,#ff0056 318px,#ff0040 335px,#ff002b 354px,#ff0019 376px)"></i>
<i style="background:linear-gradient(90deg,#007cff 116px,#006bff 150px,#0059ff 180px,#3748ff 202px,#7435ff 222px,#b621ff 240px,#fd0bff 256px,#ff00e1 263px,#ff00af 277px,#ff008f 289px,#ff0073 302px,#ff0059 317px,#ff0043 333px,#ff002e 352px,#ff001c 373px)"></i>
<i style="background:linear-gradient(90deg,#007aff 116px,#0069ff 150px,#0056ff 180px,#3745ff 202px,#7332ff 222px,#b51eff 240px,#fc07ff 256px,#ff06fe 257px,#ff00eb 261px,#ff00cb 269px,#ff00b1 277px,#ff0092 288px,#ff0076 301px,#ff005b 316px,#ff0045 332px,#ff0031 350px,#ff001e 371px)"></i>
<i style="background:linear-gradient(90deg,#0078ff 116px,#0067ff 150px,#0154ff 180px,#3742ff 202px,#732fff 222px,#b41bff 240px,#ff03ff 257px,#ff00f5 259px,#ff00d8 266px,#ff00b2 277px,#ff0093 288px,#f07 301px,#ff005e 315px,#ff0047 331px,#f03 349px,#ff0021 369px)"></i>
<i style="background:linear-gradient(90deg,#0076ff 116px,#0064ff 150px,#0151ff 180px,#3740ff 202px,#732dff 222px,#b418ff 240px,#fe00ff 257px,#ff00d5 267px,#ff00b3 277px,#ff0095 288px,#ff007a 300px,#ff0061 314px,#ff0049 330px,#ff0036 347px,#ff0023 367px)"></i>
<i style="background:linear-gradient(90deg,#0073ff 117px,#0062ff 150px,#024fff 180px,#373dff 202px,#732aff 222px,#b315ff 240px,#f300ff 255px,#fc00ff 257px,#ff00fd 258px,#ff00d3 268px,#ff00b4 277px,#ff0096 288px,#ff007b 300px,#ff0062 314px,#ff004c 329px,#ff0038 346px,#ff0026 365px)"></i>
<i style="background:linear-gradient(90deg,#0071ff 117px,#0060ff 150px,#004dff 179px,#353cff 201px,#7227ff 222px,#b212ff 240px,#e900ff 253px,#ff00fe 258px,#ff00d8 267px,#ff00b5 277px,#ff0097 288px,#ff007c 300px,#ff0064 313px,#ff004e 328px,#ff0028 363px)"></i>
<i style="background:linear-gradient(90deg,#006fff 117px,#005eff 150px,#004bff 179px,#3838ff 202px,#7225ff 222px,#b50eff 241px,#df00ff 251px,#fe00ff 258px,#ff00d9 267px,#ff00b7 277px,#ff009b 287px,#ff007f 299px,#ff0067 312px,#ff0052 326px,#ff002c 360px)"></i>
<i style="background:linear-gradient(90deg,#006dff 118px,#0148ff 179px,#3836ff 202px,#7222ff 222px,#a212ff 236px,#d500ff 249px,#fd00ff 258px,#ff00d7 268px,#ff00b8 277px,#ff009c 287px,#ff0082 298px,#ff0069 311px,#ff0054 325px,#ff002e 358px)"></i>
<i style="background:linear-gradient(90deg,#006bff 118px,#0146ff 179px,#3833ff 202px,#7220ff 222px,#9e10ff 235px,#cc01ff 247px,#fc00ff 258px,#ff00fe 259px,#ff00d8 268px,#ff00b9 277px,#ff009d 287px,#ff0083 298px,#ff006c 310px,#ff0056 324px,#ff0031 356px)"></i>
<i style="background:linear-gradient(90deg,#0069ff 118px,#0057ff 150px,#0144ff 179px,#3831ff 202px,#741cff 223px,#990fff 234px,#c301ff 245px,#f0f 259px,#f0d 267px,#ff00bd 276px,#ff00a1 286px,#ff0086 297px,#ff006f 309px,#ff0059 323px,#ff0034 354px)"></i>
<i style="background:linear-gradient(90deg,#0067ff 118px,#05f 150px,#0242ff 179px,#382eff 202px,#7419ff 223px,#be00ff 244px,#fe00ff 259px,#ff00da 268px,#f0b 277px,#ff009f 287px,#f08 297px,#ff0070 309px,#ff005b 322px,#ff0036 352px)"></i>
<i style="background:linear-gradient(90deg,#0064ff 119px,#0040ff 178px,#362dff 201px,#7118ff 222px,#b600ff 242px,#fd00ff 259px,#ff00fd 260px,#ff00dc 268px,#ff00bd 277px,#ff00a0 287px,#ff0089 297px,#ff005d 321px,#ff0039 350px)"></i>
<i style="background:linear-gradient(90deg,#0062ff 119px,#003eff 178px,#362bff 201px,#7116ff 222px,#ad00ff 240px,#d400ff 250px,#fb00ff 259px,#ff00fe 260px,#f0d 268px,#ff00be 277px,#ff00a4 286px,#ff008c 296px,#ff0061 319px,#ff003d 347px)"></i>
<i style="background:linear-gradient(90deg,#0060ff 119px,#013cff 178px,#3827ff 202px,#7412ff 223px,#a600ff 238px,#cf00ff 249px,#f0f 260px,#ff00de 268px,#ff00c2 276px,#ff00a8 285px,#ff008f 295px,#ff0064 318px,#ff0040 345px)"></i>
<i style="background:linear-gradient(90deg,#005eff 120px,#0139ff 178px,#3825ff 202px,#7310ff 223px,#9e00ff 236px,#cb00ff 248px,#fd00ff 260px,#ff00dc 269px,#ff00c0 277px,#ff0090 295px,#f06 317px,#ff0043 343px)"></i>
<i style="background:linear-gradient(90deg,#005cff 120px,#0137ff 178px,#3923ff 202px,#730dff 223px,#9700ff 234px,#c600ff 247px,#fc00ff 260px,#ff00fd 261px,#f0d 269px,#ff00c1 277px,#ff0091 295px,#ff0069 316px,#ff0046 341px)"></i>
<i style="background:linear-gradient(90deg,#005aff 120px,#0235ff 178px,#3921ff 202px,#730bff 223px,#8f00ff 232px,#c500ff 247px,#f0f 261px,#ff00e2 268px,#ff00c6 276px,#ff00ab 285px,#ff0095 294px,#ff006c 315px,#ff004a 339px)"></i>
<i style="background:linear-gradient(90deg,#0058ff 121px,#0034ff 177px,#361fff 201px,#7309ff 223px,#8c00ff 231px,#c400ff 247px,#fe00ff 261px,#ff00c7 276px,#ff0098 293px,#ff0070 313px,#ff004d 337px)"></i>
<i style="background:linear-gradient(90deg,#0056ff 121px,#0032ff 177px,#361dff 201px,#7206ff 223px,#8500ff 229px,#b500ff 243px,#fd00ff 261px,#ff00fd 262px,#ff00e0 269px,#ff00c5 277px,#f09 293px,#ff0073 312px,#ff0052 334px)"></i>
<i style="background:linear-gradient(90deg,#0054ff 121px,#0130ff 177px,#361bff 201px,#7204ff 223px,#7e00ff 227px,#b400ff 243px,#fc00ff 261px,#ff00fe 262px,#ff00e2 269px,#ff00c6 277px,#ff009d 292px,#ff0075 311px,#f05 332px)"></i>
<i style="background:linear-gradient(90deg,#0052ff 121px,#012eff 177px,#3918ff 202px,#7501ff 224px,#b700ff 244px,#f0f 262px,#ff00ca 276px,#ff00a0 291px,#ff007a 309px,#ff0059 330px)"></i>
<i style="background:linear-gradient(90deg,#0050ff 122px,#012cff 177px,#3916ff 202px,#7500ff 224px,#b600ff 244px,#fd00ff 262px,#f0c 276px,#ff00a1 291px,#ff007d 308px,#ff005c 328px)"></i>
<i style="background:linear-gradient(90deg,#004eff 122px,#022aff 177px,#3914ff 202px,#6901ff 220px,#7400ff 224px,#b500ff 244px,#fc00ff 262px,#ff00fd 263px,#ff00c9 277px,#ff00a2 291px,#ff0080 307px,#ff0060 326px)"></i>
<i style="background:linear-gradient(90deg,#004cff 122px,#0028ff 176px,#3712ff 201px,#60f 219px,#7400ff 224px,#b500ff 244px,#f0f 263px,#ff00d1 275px,#ff00a8 289px,#ff0084 305px,#ff0064 324px)"></i>
<i style="background:linear-gradient(90deg,#004aff 123px,#0026ff 176px,#3710ff 201px,#6000ff 217px,#7400ff 224px,#b400ff 244px,#fe00ff 263px,#ff00cf 276px,#ff00a9 289px,#ff0087 304px,#ff0069 321px)"></i>
<i style="background:linear-gradient(90deg,#0048ff 123px,#0124ff 176px,#2b13ff 196px,#5b00ff 215px,#7400ff 224px,#b400ff 244px,#fd00ff 263px,#ff00d0 276px,#ff00ad 288px,#ff008a 303px,#ff006d 319px)"></i>
<i style="background:linear-gradient(90deg,#0046ff 123px,#0122ff 176px,#2912ff 195px,#50f 213px,#7400ff 224px,#b300ff 244px,#fc00ff 263px,#ff00fe 264px,#ff00ce 277px,#ff00ae 288px,#ff008d 302px,#ff0072 317px)"></i>
<i style="background:linear-gradient(90deg,#04f 124px,#0121ff 176px,#2711ff 194px,#5000ff 211px,#7300ff 224px,#b600ff 245px,#f0f 264px,#ff00d6 275px,#ff00b2 287px,#ff0093 300px,#ff0076 315px)"></i>
<i style="background:linear-gradient(90deg,#0042ff 124px,#021fff 176px,#2510ff 193px,#4b00ff 209px,#7300ff 224px,#b500ff 245px,#fe00ff 264px,#ff00d7 275px,#ff00b6 286px,#ff0096 299px,#ff007a 313px)"></i>
<i style="background:linear-gradient(90deg,#0040ff 125px,#001eff 175px,#2110ff 191px,#4600ff 207px,#7300ff 224px,#b500ff 245px,#fc00ff 264px,#ff00fd 265px,#ff00d5 276px,#ff00b7 286px,#f09 298px,#ff007f 311px)"></i>
<i style="background:linear-gradient(90deg,#003eff 125px,#001cff 175px,#4100ff 205px,#7300ff 224px,#b400ff 245px,#f0f 265px,#f0d 274px,#ff00bd 284px,#ff00a1 295px,#ff0085 308px)"></i>
<i style="background:linear-gradient(90deg,#003cff 125px,#011aff 175px,#3c01ff 203px,#7200ff 224px,#b300ff 245px,#fe00ff 265px,#ff00da 275px,#ff00be 284px,#ff00a4 294px,#ff008a 306px)"></i>
<i style="background:linear-gradient(90deg,#003aff 126px,#0118ff 175px,#3a00ff 202px,#7200ff 224px,#b300ff 245px,#fd00ff 265px,#ff00d8 276px,#ff00bf 284px,#ff00a5 294px,#ff008f 304px)"></i>
<i style="background:linear-gradient(90deg,#0038ff 126px,#0116ff 175px,#3600ff 200px,#7200ff 224px,#b200ff 245px,#fc00ff 265px,#ff00fe 266px,#ff00e0 274px,#ff00c3 283px,#ff0094 302px)"></i>
<i style="background:linear-gradient(90deg,#0037ff 126px,#0214ff 175px,#3100ff 198px,#7500ff 225px,#b500ff 246px,#f0f 266px,#ff00e1 274px,#ff00c7 282px,#ff009a 300px)"></i>
<i style="background:linear-gradient(90deg,#0035ff 127px,#0013ff 174px,#2d00ff 196px,#7200ff 224px,#b400ff 246px,#fe00ff 266px,#ff00c8 282px,#ff009f 298px)"></i>
<i style="background:linear-gradient(90deg,#03f 127px,#0112ff 174px,#2900ff 194px,#4b00ff 209px,#7100ff 224px,#b400ff 246px,#fd00ff 266px,#ff00fd 267px,#ff00cd 281px,#ff00a7 295px)"></i>
<i style="background:linear-gradient(90deg,#0031ff 127px,#0110ff 174px,#2500ff 192px,#4b00ff 209px,#7400ff 225px,#b600ff 247px,#f0f 267px,#ff00d4 279px,#ff00ad 293px)"></i>
<i style="background:linear-gradient(90deg,#002fff 128px,#010eff 174px,#2100ff 190px,#4800ff 208px,#7400ff 225px,#b600ff 247px,#fe00ff 267px,#ff00d5 279px,#ff00b3 291px)"></i>
<i style="background:linear-gradient(90deg,#002dff 128px,#010cff 174px,#1d00ff 188px,#4600ff 207px,#7300ff 225px,#b500ff 247px,#fd00ff 267px,#ff00d6 279px,#ff00b9 289px)"></i>
<i style="background:linear-gradient(90deg,#002cff 128px,#000cff 173px,#1b00ff 187px,#40f 206px,#7100ff 224px,#b400ff 247px,#fc00ff 267px,#ff00fe 268px,#f0d 277px,#ff00bf 287px)"></i>
<i style="background:linear-gradient(90deg,#002aff 129px,#000aff 173px,#1700ff 185px,#40f 206px,#7300ff 225px,#b700ff 248px,#f0f 268px,#ff00e2 276px,#ff00c6 285px)"></i>
<i style="background:linear-gradient(90deg,#0028ff 129px,#0108ff 173px,#1300ff 183px,#4200ff 205px,#7300ff 225px,#b700ff 248px,#fe00ff 268px,#ff00d0 282px)"></i>
<i style="background:linear-gradient(90deg,#0026ff 130px,#0106ff 173px,#1000ff 181px,#3f00ff 204px,#7300ff 225px,#b600ff 248px,#fd00ff 268px,#ff00fd 269px,#ff00d7 280px)"></i>
<i style="background:linear-gradient(90deg,#0024ff 130px,#0105ff 173px,#0c00ff 179px,#3700ff 200px,#7200ff 225px,#b500ff 248px,#fc00ff 268px,#ff00fe 269px,#ff00de 278px)"></i>
<i style="background:linear-gradient(90deg,#0023ff 130px,#0103ff 173px,#0900ff 177px,#3900ff 201px,#7500ff 226px,#b800ff 249px,#fe00ff 269px,#ff00e6 276px)"></i>
<i style="background:linear-gradient(90deg,#0021ff 131px,#0202ff 173px,#3000ff 197px,#6500ff 220px,#ae00ff 246px,#d500ff 258px,#fd00ff 269px,#f0e 274px)"></i>
<i style="background:linear-gradient(90deg,#001fff 131px,#0002ff 171px,#0600ff 175px,#3900ff 201px,#6f00ff 224px,#b400ff 248px,#fc00ff 269px,#ff00f6 272px)"></i>
<i style="background:linear-gradient(90deg,#001dff 132px,#00f 171px,#0b00ff 178px,#4000ff 204px,#7a00ff 228px,#b600ff 249px,#fb00ff 269px)"></i>
<i style="background:linear-gradient(90deg,#001bff 132px,#00f 171px,#0800ff 176px,#3b00ff 202px,#7400ff 226px,#af00ff 247px,#f300ff 267px)"></i>
<i style="background:linear-gradient(90deg,#001aff 132px,#00f 167px,#0300ff 173px,#3500ff 199px,#6c00ff 223px,#a900ff 245px,#eb00ff 265px)"></i>
<i style="background:linear-gradient(90deg,#0018ff 133px,#00f 165px,#0200ff 172px,#30f 198px,#6700ff 221px,#a200ff 243px,#e300ff 263px)"></i>
<i style="background:linear-gradient(90deg,#0016ff 133px,#00f 163px,#00f 171px,#3100ff 197px,#6500ff 220px,#9c00ff 241px,#db00ff 261px)"></i>
<i style="background:linear-gradient(90deg,#0014ff 134px,#00f 161px,#00f 171px,#2f00ff 196px,#6200ff 219px,#90f 240px,#d300ff 259px)"></i>
<i style="background:linear-gradient(90deg,#0013ff 134px,#00f 159px,#0100ff 171px,#2d00ff 195px,#5d00ff 217px,#9000ff 237px,#c900ff 256px)"></i>
<i style="background:linear-gradient(90deg,#01f 134px,#00f 158px,#0100ff 171px,#2b00ff 194px,#5b00ff 216px,#8d00ff 236px,#c200ff 254px)"></i>
<i style="background:linear-gradient(90deg,#000fff 135px,#00f 156px,#0100ff 171px,#2a00ff 193px,#5600ff 214px,#8700ff 234px,#b0f 252px)"></i>
<i style="background:linear-gradient(90deg,#000eff 135px,#00f 154px,#0200ff 171px,#2a00ff 193px,#5400ff 213px,#8200ff 232px,#b400ff 250px)"></i>
<i style="background:linear-gradient(90deg,#000bff 136px,#00f 152px,#00f 170px,#2800ff 192px,#5100ff 212px,#7f00ff 231px,#ae00ff 248px)"></i>
<i style="background:linear-gradient(90deg,#000aff 136px,#00f 150px,#00f 170px,#2600ff 191px,#4f00ff 211px,#7a00ff 229px,#a700ff 246px)"></i>
<i style="background:linear-gradient(90deg,#0008ff 137px,#00f 148px,#0100ff 170px,#2400ff 190px,#4b00ff 209px,#7400ff 227px,#9e00ff 243px)"></i>
<i style="background:linear-gradient(90deg,#0007ff 137px,#00f 146px,#0100ff 170px,#2500ff 190px,#4900ff 208px,#6f00ff 225px,#90f 241px)"></i>
<i style="background:linear-gradient(90deg,#0005ff 137px,#00f 145px,#0100ff 170px,#2300ff 189px,#4700ff 207px,#6a00ff 223px,#9300ff 239px)"></i>
<i style="background:linear-gradient(90deg,#0003ff 138px,#00f 143px,#00f 169px,#4200ff 205px,#60f 221px,#8d00ff 237px)"></i>
<i style="background:linear-gradient(90deg,#0002ff 138px,#00f 169px,#4000ff 204px,#80f 235px)"></i>
<i style="background:linear-gradient(90deg,#00f 139px,#0100ff 169px,#3e00ff 203px,#8200ff 233px)"></i>
<i style="background:linear-gradient(90deg,#00f 139px,#0100ff 169px,#3a00ff 201px,#7b00ff 230px)"></i>
<i style="background:linear-gradient(90deg,#00f 140px,#0100ff 169px,#3900ff 200px,#7600ff 228px)"></i>
<i style="background:linear-gradient(90deg,#00f 140px,#00f 168px,#3500ff 198px,#7100ff 226px)"></i>
<i style="background:linear-gradient(90deg,#00f 141px,#00f 168px,#30f 197px,#6c00ff 224px)"></i>
<i style="background:linear-gradient(90deg,#00f 142px,#00f 168px,#3100ff 196px,#6700ff 222px)"></i>
<i style="background:linear-gradient(90deg,#00f 142px,#0100ff 168px,#2f00ff 195px,#6200ff 220px)"></i>
<i style="background:linear-gradient(90deg,#00f 143px,#0100ff 168px,#2c00ff 193px,#5c00ff 217px)"></i>
<i style="background:linear-gradient(90deg,#00f 143px,#0100ff 168px,#2a00ff 192px,#5700ff 215px)"></i>
<i style="background:linear-gradient(90deg,#00f 144px,#00f 167px,#2600ff 190px,#5300ff 213px)"></i>
<i style="background:linear-gradient(90deg,#00f 144px,#00f 167px,#2700ff 190px,#4f00ff 211px)"></i>
<i style="background:linear-gradient(90deg,#00f 145px,#00f 167px,#2500ff 189px,#4b00ff 209px)"></i>
<i style="background:linear-gradient(90deg,#00f 146px,#0100ff 167px,#2300ff 188px,#4700ff 207px)"></i>
<i style="background:linear-gradient(90deg,#00f 146px,#0100ff 167px,#4100ff 204px)"></i>
<i style="background:linear-gradient(90deg,#00f 147px,#00f 166px,#3d00ff 202px)"></i>
<i style="background:linear-gradient(90deg,#00f 148px,#00f 166px,#3a00ff 200px)"></i>
<i style="background:linear-gradient(90deg,#00f 149px,#00f 166px,#3600ff 198px)"></i>
<i style="background:linear-gradient(90deg,#00f 149px,#00f 166px,#3200ff 196px)"></i>
<i style="background:linear-gradient(90deg,#00f 150px,#0100ff 166px,#2f00ff 194px)"></i>
<i style="background:linear-gradient(90deg,#00f 151px,#0100ff 166px,#2b00ff 192px)"></i>
<i style="background:linear-gradient(90deg,#00f 152px,#00f 165px,#2600ff 189px)"></i>
<i style="background:linear-gradient(90deg,#00f 153px,#00f 165px,#2300ff 187px)"></i>
<i style="background:linear-gradient(90deg,#00f 154px,#00f 165px,#2000ff 185px)"></i>
<i style="background:linear-gradient(90deg,#00f 155px,#00f 165px,#1d00ff 183px)"></i>
<i style="background:linear-gradient(90deg,#00f 156px,#0100ff 165px,#1a00ff 181px)"></i>
<i style="background:linear-gradient(90deg,#00f 158px,#0100ff 165px,#1600ff 179px)"></i>
<i style="background:linear-gradient(90deg,#00f 159px,#00f 164px,#1200ff 176px)"></i>
<i style="background:linear-gradient(90deg,#00f 160px,#00f 164px,#0f00ff 174px)"></i>
<i style="background:linear-gradient(90deg,#00f 161px,#00f 164px,#0c00ff 172px)"></i>
<i style="background:linear-gradient(90deg,#00f 162px,#0900ff 170px)"></i>
<i></i>
</div>
<svg class="ov" width="480" height="480" viewBox="0 0 480 480">
<filter id="sb" x="0" y="0" width="480" height="480" filterUnits="userSpaceOnUse"><feGaussianBlur stdDeviation="0.65"/></filter>
<path fill="#000" fill-rule="evenodd" filter="url(#sb)" d="M0 0H480V480H0Z M165.7 405.8 165.6 405.7 165.5 405.7 165.4 405.6 165.3 405.5 165.2 405.4 165.1 405.4 165.0 405.3 164.9 405.2 164.8 405.1 164.6 405.0 164.5 404.8 164.3 404.7 164.1 404.5 163.9 404.4 163.7 404.2 163.5 404.0 163.3 403.8 163.1 403.6 162.9 403.4 162.6 403.2 162.4 403.0 162.1 402.7 161.8 402.5 161.5 402.2 161.2 401.9 160.8 401.6 160.5 401.3 160.1 400.9 159.6 400.6 159.2 400.2 158.8 399.8 158.3 399.4 157.8 399.0 157.3 398.5 156.7 398.0 156.2 397.5 155.6 396.9 155.0 396.3 154.3 395.6 153.7 394.9 153.0 394.2 152.3 393.4 151.5 392.5 150.8 391.6 149.9 390.4 149.0 389.2 148.1 387.8 147.1 386.2 146.0 384.5 144.9 382.6 143.7 380.5 142.5 378.2 141.2 375.7 139.9 372.9 138.5 369.8 137.1 366.4 135.5 362.8 133.9 358.7 132.3 354.4 130.5 349.6 128.6 344.5 126.6 338.9 124.6 333.0 122.6 326.6 120.5 319.7 118.5 312.3 116.4 304.5 114.4 296.2 112.3 287.4 110.3 278.2 108.2 268.5 106.2 258.4 104.3 248.0 102.4 237.3 100.6 226.4 99.0 215.4 97.5 204.2 96.1 193.1 94.9 182.0 93.9 171.1 93.1 160.3 92.5 149.8 92.1 139.5 91.9 129.6 92.0 119.9 92.4 110.6 93.0 101.7 93.8 93.2 95.0 85.3 96.4 77.9 98.1 71.1 100.1 65.0 102.3 59.5 104.8 54.7 107.4 50.7 110.3 47.4 113.3 44.9 116.4 43.0 119.6 41.8 123.0 41.1 126.4 41.0 129.9 41.3 133.4 42.1 137.0 43.1 140.5 44.5 144.1 46.0 147.7 47.7 151.3 49.5 154.9 51.4 158.4 53.4 161.8 55.4 165.2 57.5 168.6 59.7 171.9 61.9 175.2 64.1 178.4 66.4 181.7 68.7 184.9 71.1 188.1 73.6 191.3 76.1 194.5 78.7 197.7 81.3 200.9 83.9 204.1 86.6 207.3 89.3 210.4 92.1 213.6 94.9 216.7 97.7 219.9 100.5 223.0 103.4 226.1 106.3 229.3 109.2 232.4 112.1 235.6 115.1 238.7 118.1 241.9 121.1 245.0 124.1 248.2 127.1 251.3 130.2 254.5 133.2 257.6 136.3 260.7 139.3 263.9 142.4 267.0 145.5 270.1 148.6 273.3 151.7 276.4 154.7 279.5 157.8 282.6 160.9 285.7 163.9 288.8 167.0 291.9 170.0 294.9 173.1 297.9 176.1 301.0 179.1 304.0 182.1 307.0 185.1 309.9 188.0 312.9 191.0 315.8 193.9 318.7 196.8 321.6 199.7 324.4 202.5 327.2 205.3 330.0 208.1 332.8 210.8 335.5 213.5 338.2 216.1 340.8 218.8 343.4 221.4 345.9 223.9 348.4 226.4 350.9 228.8 353.3 231.2 355.6 233.5 357.8 235.8 360.0 237.9 362.1 240.0 364.2 242.1 366.2 244.1 368.2 246.1 370.1 248.0 371.9 249.8 373.8 251.6 375.5 253.4 377.2 255.0 378.8 256.6 380.3 258.2 381.8 259.6 383.3 261.0 384.6 262.4 385.9 263.7 387.2 265.0 388.4 266.2 389.5 267.3 390.6 268.4 391.7 269.5 392.7 270.5 393.6 271.4 394.6 272.3 395.4 273.2 396.3 274.0 397.1 274.8 397.8 275.6 398.6 276.3 399.3 277.0 399.9 277.7 400.6 278.3 401.2 278.9 401.8 279.5 402.4 280.1 402.9 280.7 403.4 281.2 404.0 281.7 404.5 282.2 404.9 282.7 405.4 283.1 405.8 283.6 406.3 284.0 406.7 284.4 407.0 284.8 407.4 285.1 407.8 285.5 408.1 285.8 408.4 286.1 408.7 286.4 409.0 286.7 409.3 287.0 409.5 287.2 409.7 287.4 410.0 287.7 410.2 287.9 410.4 288.1 410.6 288.3 410.8 288.5 410.9 288.6 411.1 288.8 411.2 288.9 411.4 289.1 411.5 289.2 411.6 289.3 411.7 289.4 411.8 289.5 411.9 289.6 412.0 289.7 412.1 289.8 412.2 289.9 412.2 289.9 412.3 290.0 412.4 290.1 412.4 290.1 412.5 290.2 412.6 290.3 412.6 290.3 412.7 290.4 412.7 290.4 412.8 290.5 412.9 290.6 412.9 290.6 413.0 290.7 413.1 290.8 413.1 290.8 413.2 290.9 413.2 290.9 413.3 291.0 413.3 291.0 413.3 291.0 413.4 291.1 413.4 291.1 413.4 291.1 413.5 291.2 413.5 291.2 413.5 291.2 413.5 291.2 413.5 291.2 413.5 291.2 413.5 291.2 413.6 291.3 413.6 291.3 413.6 291.3Z"/>
<path d="M165.7 405.8 L162.5 412.0 M159.2 400.2 L154.6 405.5 M156.7 398.0 L154.6 400.3 M153.7 394.9 L148.6 399.7 M149.9 390.4 L147.3 392.3 M144.9 382.6 L138.8 386.0 M138.5 369.8 L135.6 371.1 M130.5 349.6 L123.9 352.0 M120.5 319.7 L117.5 320.6 M110.3 278.2 L103.4 279.7 M100.6 226.4 L97.5 226.9 M93.9 171.1 L86.9 171.7 M92.0 119.9 L88.8 119.8 M96.4 77.9 L89.6 76.4 M107.4 50.7 L104.9 48.8 M123.0 41.1 L122.2 34.2 M140.5 44.5 L141.7 41.5 M158.4 53.4 L161.9 47.3 M175.2 64.1 L177.0 61.5 M191.3 76.1 L195.7 70.6 M207.3 89.3 L209.3 86.9 M223.0 103.4 L227.7 98.2 M238.7 118.1 L240.9 115.8 M254.5 133.2 L259.3 128.2 M270.1 148.6 L272.4 146.3 M285.7 163.9 L290.6 159.0 M301.0 179.1 L303.2 176.8 M315.8 193.9 L320.7 188.9 M330.0 208.1 L332.3 205.8 M343.4 221.4 L348.3 216.4 M355.6 233.5 L357.8 231.3 M366.2 244.1 L371.1 239.1 M375.5 253.4 L377.8 251.1 M383.3 261.0 L388.2 256.1 M389.5 267.3 L391.8 265.1 M394.6 272.3 L399.5 267.4 M398.6 276.3 L400.8 274.0 M401.8 279.5 L406.7 274.6 M413.6 291.3 L418.8 286.6" stroke="#707070" stroke-width="1" fill="none"/>
<g font-family="Liberation Sans,Arial,sans-serif" font-weight="bold" font-size="12" fill="#fff" text-anchor="middle">
<text x="120.4" y="31.7">520</text>
<text x="172.9" y="44.2">530</text>
<text x="206.6" y="67.9">540</text>
<text x="237.8" y="94.7">550</text>
<text x="269.8" y="125.0">560</text>
<text x="301.6" y="156.2">570</text>
<text x="331.0" y="185.7">580</text>
<text x="359.0" y="213.9">590</text>
<text x="381.2" y="235.7">600</text>
<text x="398.4" y="253.1">610</text>
<text x="77.9" y="82.4">510</text>
<text x="92.2" y="285.1">490</text>
<text x="112.9" y="358.1">480</text>
<text x="127.9" y="397.4">470</text>
<text x="137.6" y="413.1">460</text>
<text x="152.2" y="425.2">420</text>
</g>
<circle cx="243" cy="262.1" r="4.9" fill="#fff"/>
<rect x="240.5" y="259.5" width="5" height="5" fill="#fff" stroke="#f1f1f1" stroke-width="1"/>
<circle cx="117.4" cy="393.5" r="3.4" fill="#fff"/>
</svg>
</div>

<div class="abs lbl" style="left:353px;top:628px">Mode:</div>
<div class="abs rad on" style="left:354px;top:646px"></div>
<div class="abs lbl" style="left:372px;top:646px">xy</div>
<div class="abs rad" style="left:397px;top:646px"></div>
<div class="abs lbl" style="left:415px;top:646px">u'v'</div>
</body>
</html>
